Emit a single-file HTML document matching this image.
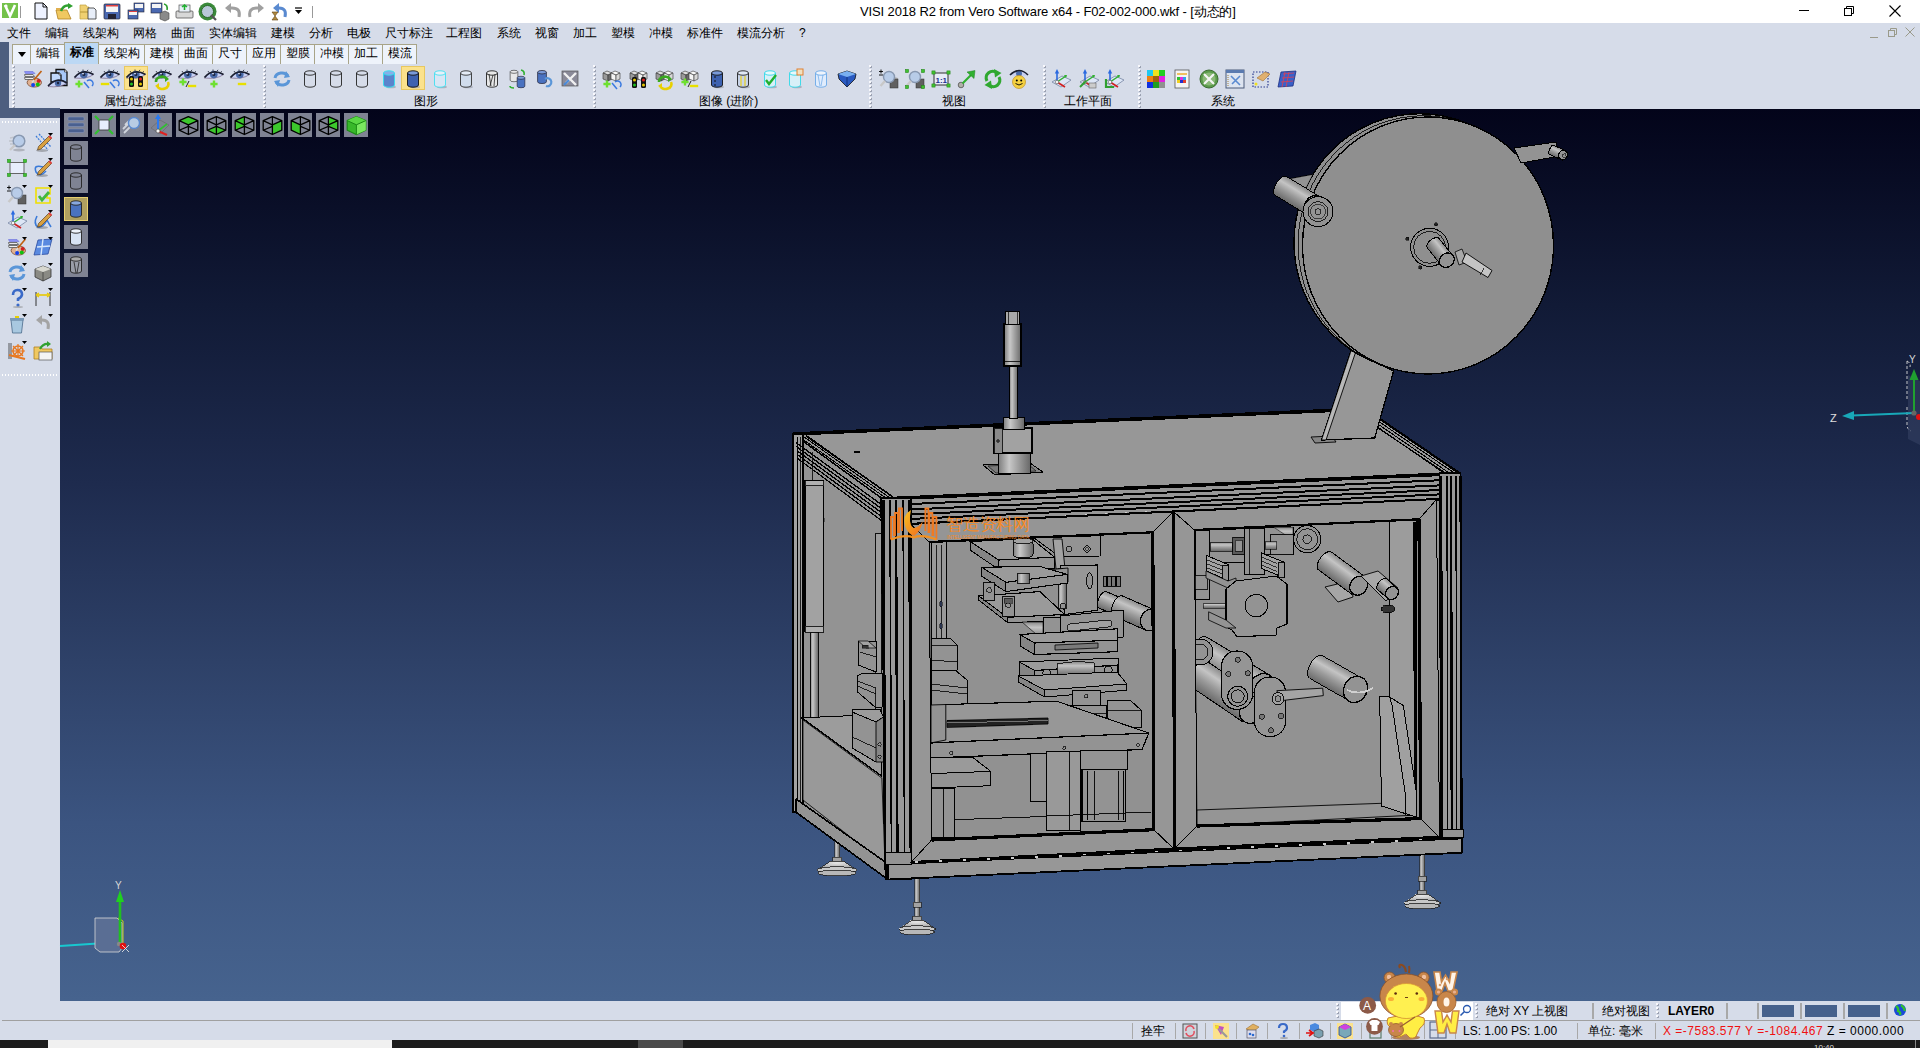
<!DOCTYPE html>
<html><head><meta charset="utf-8"><style>
*{margin:0;padding:0;box-sizing:border-box}
html,body{width:1920px;height:1048px;overflow:hidden;background:#d6dce9;font-family:"Liberation Sans",sans-serif;font-size:12px;color:#000}
.a{position:absolute;overflow:visible}
.m{position:absolute;top:26px;font-size:12px;line-height:14px;white-space:nowrap}
.tab{position:absolute;top:44px;height:20px;background:#eef3fb;border-left:1px solid #a8a488;font-size:12px;line-height:18px;text-align:center;white-space:nowrap}
.lbl{position:absolute;top:94px;font-size:12px;line-height:14px;white-space:nowrap}
.dsep{position:absolute;width:3px}
.vb{position:absolute;width:24px;height:24px;background:#7f8393}
.st{position:absolute;font-size:12px;line-height:14px;white-space:nowrap}
.vl{position:absolute;width:2px;height:16px;background:#a8a8a8}
</style></head><body>
<svg width="0" height="0" style="position:absolute"><defs><pattern id="dp" width="3" height="4" patternUnits="userSpaceOnUse"><rect x="1" y="1" width="2" height="2" fill="#9ca2b2"/><rect x="0" y="0" width="2" height="2" fill="#f8f8fc"/></pattern></defs></svg>
<div class="a" style="left:0;top:0;width:1920px;height:23px;background:#fff"></div>
<svg class="a" style="left:2px;top:3px" width="16" height="16" viewBox="0 0 16 16"><rect x="0" y="0" width="16" height="15" fill="#74c24a"/><path d="M3 2 L8 13 L13 2" fill="none" stroke="#fff" stroke-width="2.6"/><circle cx="4" cy="3" r="1.6" fill="#fff"/></svg>
<div class="a" style="left:20px;top:6px;width:1px;height:12px;background:#999"></div>
<svg class="a" style="left:33px;top:2px" width="19" height="19" viewBox="0 0 19 19"><path d="M2 1 H10 L14 5 V17 H2Z" fill="#eef2ff" stroke="#111" stroke-width="1"/><path d="M10 1 V5 H14" fill="none" stroke="#111" stroke-width="1"/></svg>
<svg class="a" style="left:55px;top:2px" width="19" height="19" viewBox="0 0 19 19"><path d="M1 8 H12 L16 17 H3Z" fill="#f0c860" stroke="#b08020" stroke-width="0.8"/><path d="M1 6 H6 L7 8 H1Z" fill="#e0b050"/><path d="M6 9 Q9 2 15 4" fill="none" stroke="#30a030" stroke-width="2.5"/><path d="M13 1 L18 4 L13 7Z" fill="#30a030"/></svg>
<svg class="a" style="left:79px;top:2px" width="19" height="19" viewBox="0 0 19 19"><path d="M1 3 H7 L8 5 H10 V10 H1Z M1 10 H10 V17 H1Z" fill="#f0d070" stroke="#c0a040" stroke-width="0.7"/><path d="M9 6 H15 L17 8 V17 H9Z" fill="#e8eef8" stroke="#333" stroke-width="0.8"/></svg>
<svg class="a" style="left:103px;top:2px" width="19" height="19" viewBox="0 0 19 19"><rect x="1" y="2" width="16" height="15" rx="1" fill="#4a68b0" stroke="#223" stroke-width="0.7"/><rect x="3" y="3" width="12" height="7" fill="#f4f4f4"/><rect x="3" y="3" width="12" height="1.5" fill="#e04040"/><rect x="5" y="12" width="8" height="5" fill="#223"/></svg>
<svg class="a" style="left:127px;top:2px" width="19" height="19" viewBox="0 0 19 19"><rect x="7" y="1" width="10" height="9" fill="#4a68b0" stroke="#223" stroke-width="0.6"/><rect x="8" y="2" width="8" height="4" fill="#f4f4f4"/><rect x="1" y="8" width="10" height="9" fill="#4a68b0" stroke="#223" stroke-width="0.6"/><rect x="2" y="9" width="8" height="4" fill="#f4f4f4"/><rect x="2" y="9" width="8" height="1" fill="#e04040"/></svg>
<svg class="a" style="left:150px;top:2px" width="19" height="19" viewBox="0 0 19 19"><rect x="1" y="1" width="11" height="10" fill="#4a68b0" stroke="#223" stroke-width="0.6"/><rect x="2" y="2" width="9" height="4" fill="#f4f4f4"/><path d="M10 11 L15 9 L19 11 V17 L15 19 L10 17Z" fill="#8a8a8a" stroke="#444" stroke-width="0.6"/><path d="M14 2 Q18 3 17 8" fill="none" stroke="#30a030" stroke-width="1.6"/></svg>
<svg class="a" style="left:175px;top:2px" width="19" height="19" viewBox="0 0 19 19"><rect x="1" y="9" width="17" height="7" rx="1" fill="#d8d8d8" stroke="#555" stroke-width="0.8"/><rect x="4" y="3" width="11" height="7" fill="#e8f0f8" stroke="#555" stroke-width="0.7"/><path d="M9.5 3 V8 M7 5 L9.5 3 L12 5" stroke="#20b030" stroke-width="1.6" fill="none"/></svg>
<svg class="a" style="left:198px;top:2px" width="19" height="19" viewBox="0 0 19 19"><circle cx="9.5" cy="9.5" r="9" fill="#3a8a3a"/><circle cx="9.5" cy="9.5" r="6" fill="#b8c8d8" stroke="#2a6a2a" stroke-width="1"/><path d="M13 13 L18 18" stroke="#555" stroke-width="2.2"/></svg>
<svg class="a" style="left:224px;top:2px" width="19" height="19" viewBox="0 0 19 19"><path d="M15 15 Q17 6 8 6 H5" fill="none" stroke="#a0a0a0" stroke-width="3"/><path d="M1 6 L7 1 V11Z" fill="#a0a0a0"/></svg>
<svg class="a" style="left:247px;top:2px" width="19" height="19" viewBox="0 0 19 19"><path d="M3 15 Q1 6 10 6 H13" fill="none" stroke="#a0a0a0" stroke-width="3"/><path d="M17 6 L11 1 V11Z" fill="#a0a0a0"/></svg>
<svg class="a" style="left:270px;top:2px" width="19" height="19" viewBox="0 0 19 19"><path d="M15 15 Q17 6 9 6 H7" fill="none" stroke="#5a8ad0" stroke-width="3"/><path d="M3 6 L9 1 V11Z" fill="#5a8ad0"/><path d="M2 10 H8 L5 14 L8 18 H2 L5 14Z" fill="#b08a40" stroke="#604010" stroke-width="0.6"/></svg>
<svg class="a" style="left:294px;top:6px" width="10" height="10" viewBox="0 0 10 10"><path d="M1 2 H8" stroke="#000" stroke-width="1.2"/><path d="M1 4 H8 L4.5 8Z" fill="#000"/></svg>
<div class="a" style="left:312px;top:6px;width:1px;height:12px;background:#999"></div>
<div class="a" style="left:860px;top:4px;font-size:13px;line-height:15px;white-space:nowrap;letter-spacing:-0.13px">VISI 2018 R2 from Vero Software x64 - F02-002-000.wkf - [动态的]</div>
<svg class="a" style="left:1796px;top:4px" width="16" height="16" viewBox="0 0 16 16"><path d="M3 6.5 H13" stroke="#000" stroke-width="1"/></svg>
<svg class="a" style="left:1841px;top:3px" width="16" height="16" viewBox="0 0 16 16"><rect x="3.5" y="5.5" width="7" height="7" fill="none" stroke="#000" stroke-width="1"/><path d="M5.5 5.5 V3.5 H12.5 V10.5 H10.5" fill="none" stroke="#000" stroke-width="1"/></svg>
<svg class="a" style="left:1887px;top:3px" width="16" height="16" viewBox="0 0 16 16"><path d="M2.5 2.5 L13.5 13.5 M13.5 2.5 L2.5 13.5" stroke="#000" stroke-width="1.1"/></svg>
<div class="a" style="left:0;top:23px;width:1920px;height:19px;background:#d6dce9"></div>
<div class="m" style="left:7px">文件</div>
<div class="m" style="left:45px">编辑</div>
<div class="m" style="left:83px">线架构</div>
<div class="m" style="left:133px">网格</div>
<div class="m" style="left:171px">曲面</div>
<div class="m" style="left:209px">实体编辑</div>
<div class="m" style="left:271px">建模</div>
<div class="m" style="left:309px">分析</div>
<div class="m" style="left:347px">电极</div>
<div class="m" style="left:385px">尺寸标注</div>
<div class="m" style="left:446px">工程图</div>
<div class="m" style="left:497px">系统</div>
<div class="m" style="left:535px">视窗</div>
<div class="m" style="left:573px">加工</div>
<div class="m" style="left:611px">塑模</div>
<div class="m" style="left:649px">冲模</div>
<div class="m" style="left:687px">标准件</div>
<div class="m" style="left:737px">模流分析</div>
<div class="m" style="left:799px">?</div>
<svg class="a" style="left:1868px;top:28px" width="12" height="12" viewBox="0 0 12 12"><path d="M2 9.5 H10" stroke="#9a9a8a" stroke-width="1"/></svg>
<svg class="a" style="left:1886px;top:26px" width="12" height="12" viewBox="0 0 12 12"><rect x="2.5" y="4.5" width="6" height="6" fill="none" stroke="#9a9a8a"/><path d="M4.5 4.5V2.5H10.5V8.5H8.5" fill="none" stroke="#9a9a8a"/></svg>
<svg class="a" style="left:1904px;top:26px" width="12" height="12" viewBox="0 0 12 12"><path d="M1.5 1.5 L10.5 10.5 M10.5 1.5 L1.5 10.5" stroke="#9a9a8a" stroke-width="1"/></svg>
<div class="a" style="left:0;top:42px;width:9px;height:76px;background:#4d5e7f"></div>
<div class="a" style="left:9px;top:42px;width:1911px;height:22px;background:#d6dce9"></div>
<div class="a" style="left:12px;top:44px;width:405px;height:20px;background:#eef3fb;border-top:1px solid #a8a488;border-right:1px solid #a8a488"></div>
<div class="tab" style="left:12px;width:18px;top:45px;height:19px;line-height:17px"></div>
<div class="tab" style="left:30px;width:34px;top:45px;height:19px;line-height:17px">编辑</div>
<div class="tab" style="left:64px;top:42px;width:35px;height:22px;background:#bcd8f4;border:1px solid #a8a488;border-bottom:none;font-weight:bold;line-height:18px">标准</div>
<div class="tab" style="left:98px;width:46px;top:45px;height:19px;line-height:17px">线架构</div>
<div class="tab" style="left:144px;width:34px;top:45px;height:19px;line-height:17px">建模</div>
<div class="tab" style="left:178px;width:34px;top:45px;height:19px;line-height:17px">曲面</div>
<div class="tab" style="left:212px;width:34px;top:45px;height:19px;line-height:17px">尺寸</div>
<div class="tab" style="left:246px;width:34px;top:45px;height:19px;line-height:17px">应用</div>
<div class="tab" style="left:280px;width:34px;top:45px;height:19px;line-height:17px">塑膜</div>
<div class="tab" style="left:314px;width:34px;top:45px;height:19px;line-height:17px">冲模</div>
<div class="tab" style="left:348px;width:34px;top:45px;height:19px;line-height:17px">加工</div>
<div class="tab" style="left:382px;width:34px;top:45px;height:19px;line-height:17px">模流</div>
<svg class="a" style="left:17px;top:50px" width="10" height="8" viewBox="0 0 10 8"><path d="M1 2 H9 L5 7Z" fill="#000"/></svg>
<div class="a" style="left:9px;top:64px;width:1911px;height:45px;background:#d6dce9"></div>
<svg class="a" style="left:12px;top:65px" width="3" height="43"><rect width="3" height="43" fill="url(#dp)"/></svg>
<svg class="a" style="left:263px;top:65px" width="3" height="43"><rect width="3" height="43" fill="url(#dp)"/></svg>
<svg class="a" style="left:593px;top:65px" width="3" height="43"><rect width="3" height="43" fill="url(#dp)"/></svg>
<svg class="a" style="left:869px;top:65px" width="3" height="43"><rect width="3" height="43" fill="url(#dp)"/></svg>
<svg class="a" style="left:1043px;top:65px" width="3" height="43"><rect width="3" height="43" fill="url(#dp)"/></svg>
<svg class="a" style="left:1138px;top:65px" width="3" height="43"><rect width="3" height="43" fill="url(#dp)"/></svg>
<div class="lbl" style="left:104px">属性/过滤器</div>
<div class="lbl" style="left:414px">图形</div>
<div class="lbl" style="left:699px">图像 (进阶)</div>
<div class="lbl" style="left:942px">视图</div>
<div class="lbl" style="left:1064px">工作平面</div>
<div class="lbl" style="left:1211px">系统</div>
<div class="a" style="left:124px;top:66px;width:24px;height:24px;background:#fbe28c;border:1px solid #e8c860"></div>
<div class="a" style="left:401px;top:66px;width:24px;height:24px;background:#fbe28c;border:1px solid #e8c860"></div>
<svg class="a" style="left:23px;top:69px" width="20" height="20" viewBox="0 0 20 20"><ellipse cx="11.3" cy="13.5" rx="7.2" ry="4.6" fill="#e0b090" stroke="#7a4a30" stroke-width="0.8"/>
<path d="M1.5 2.5 H10 L12 4.5 H2.5Z" fill="#8a90f8" stroke="#6a70d8" stroke-width="0.6"/>
<path d="M1.5 5.5 H10 L11.5 7.5 H2Z" fill="#e8e8e8" stroke="#555" stroke-width="0.8"/>
<path d="M1.5 8.5 H10 L11.5 10.5 H2Z" fill="#f0f0f0" stroke="#555" stroke-width="0.8"/>
<circle cx="15.7" cy="12" r="2" fill="#d02020"/><circle cx="14.8" cy="15.5" r="2" fill="#10c010"/><circle cx="10.1" cy="16" r="2" fill="#1040f0"/>
<path d="M18.5 2 L10 12" stroke="#c06010" stroke-width="1.6"/><path d="M11 11 L9 13.5" stroke="#ddd" stroke-width="1.8"/></svg>
<svg class="a" style="left:48px;top:69px" width="20" height="20" viewBox="0 0 20 20"><path d="M8 0.5 H16.5 L19 3 V16.5 H8Z" fill="#a8c8f8" stroke="#111" stroke-width="1.3"/><path d="M16.5 0.5 V3 H19" fill="#fff" stroke="#111" stroke-width="0.6"/>
<path d="M3 4 H11 L13 6 V13 H3Z" fill="#c0d8fc" stroke="#111" stroke-width="1.3"/><path d="M11 4 V6 H13" fill="#fff" stroke="#111" stroke-width="0.6"/>
<path d="M0 17.5 Q9 7 19 14 Q12 19 0 17.5Z" fill="#c8d2f4" stroke="#5a3a5a" stroke-width="0.5"/>
<circle cx="10" cy="14" r="3.2" fill="#4a6aa8"/><circle cx="10" cy="14" r="1.2" fill="#1a2440"/>
<path d="M0 17 Q9 7 19 14" fill="none" stroke="#1a1f30" stroke-width="1.6"/></svg>
<svg class="a" style="left:74px;top:69px" width="20" height="20" viewBox="0 0 20 20"><g transform="translate(0,0)">
<path d="M0.5 9 Q8 -1 19.5 5.5 Q13 10.5 0.5 9Z" fill="#c8d2f4" stroke="#5a3a5a" stroke-width="0.5"/>
<circle cx="9.8" cy="5.6" r="3.8" fill="#4a6aa8"/><circle cx="9.8" cy="5.6" r="1.5" fill="#1a2440"/><circle cx="9" cy="4.6" r="0.9" fill="#dfe8ff"/>
<path d="M0.5 8.6 Q8 -1 19.5 5.5" fill="none" stroke="#1a1f30" stroke-width="1.7"/>
<path d="M5 3.5 L4 2 M9 2 L9 0.5 M13 2.2 L14 0.8 M16.5 3.4 L18 2.4" stroke="#1a1f30" stroke-width="0.8"/>
</g><path d="M1.4 15H8.6M5 11.4V18.6" stroke="#6ee030" stroke-width="2.4"/><path d="M10 13 L15 19" stroke="#3a7ae0" stroke-width="1.5"/><path d="M13 12 A3.2 3.2 0 1 1 18 17" fill="none" stroke="#3a7ae0" stroke-width="1.5"/></svg>
<svg class="a" style="left:100px;top:69px" width="20" height="20" viewBox="0 0 20 20"><g transform="translate(0,0)">
<path d="M0.5 9 Q8 -1 19.5 5.5 Q13 10.5 0.5 9Z" fill="#c8d2f4" stroke="#5a3a5a" stroke-width="0.5"/>
<circle cx="9.8" cy="5.6" r="3.8" fill="#4a6aa8"/><circle cx="9.8" cy="5.6" r="1.5" fill="#1a2440"/><circle cx="9" cy="4.6" r="0.9" fill="#dfe8ff"/>
<path d="M0.5 8.6 Q8 -1 19.5 5.5" fill="none" stroke="#1a1f30" stroke-width="1.7"/>
<path d="M5 3.5 L4 2 M9 2 L9 0.5 M13 2.2 L14 0.8 M16.5 3.4 L18 2.4" stroke="#1a1f30" stroke-width="0.8"/>
</g><path d="M0.7999999999999998 15H9.2" stroke="#e8e000" stroke-width="2.4"/><path d="M10 13 L15 19" stroke="#3a7ae0" stroke-width="1.5"/><path d="M13 12 A3.2 3.2 0 1 1 18 17" fill="none" stroke="#3a7ae0" stroke-width="1.5"/></svg>
<svg class="a" style="left:126px;top:69px" width="20" height="20" viewBox="0 0 20 20"><g transform="translate(0,0)">
<path d="M0.5 9 Q8 -1 19.5 5.5 Q13 10.5 0.5 9Z" fill="#c8d2f4" stroke="#5a3a5a" stroke-width="0.5"/>
<circle cx="9.8" cy="5.6" r="3.8" fill="#4a6aa8"/><circle cx="9.8" cy="5.6" r="1.5" fill="#1a2440"/><circle cx="9" cy="4.6" r="0.9" fill="#dfe8ff"/>
<path d="M0.5 8.6 Q8 -1 19.5 5.5" fill="none" stroke="#1a1f30" stroke-width="1.7"/>
<path d="M5 3.5 L4 2 M9 2 L9 0.5 M13 2.2 L14 0.8 M16.5 3.4 L18 2.4" stroke="#1a1f30" stroke-width="0.8"/>
</g><rect x="3" y="7" width="5" height="11" rx="1.5" fill="#111"/><rect x="12" y="7" width="5" height="11" rx="1.5" fill="#111"/>
<circle cx="5.5" cy="10" r="1.5" fill="#e8c800"/><circle cx="5.5" cy="15" r="1.5" fill="#20c020"/><circle cx="14.5" cy="10" r="1.5" fill="#e02020"/><circle cx="14.5" cy="15" r="1.5" fill="#e8c800"/></svg>
<svg class="a" style="left:152px;top:69px" width="20" height="20" viewBox="0 0 20 20"><g transform="translate(0,0)">
<path d="M0.5 9 Q8 -1 19.5 5.5 Q13 10.5 0.5 9Z" fill="#c8d2f4" stroke="#5a3a5a" stroke-width="0.5"/>
<circle cx="9.8" cy="5.6" r="3.8" fill="#4a6aa8"/><circle cx="9.8" cy="5.6" r="1.5" fill="#1a2440"/><circle cx="9" cy="4.6" r="0.9" fill="#dfe8ff"/>
<path d="M0.5 8.6 Q8 -1 19.5 5.5" fill="none" stroke="#1a1f30" stroke-width="1.7"/>
<path d="M5 3.5 L4 2 M9 2 L9 0.5 M13 2.2 L14 0.8 M16.5 3.4 L18 2.4" stroke="#1a1f30" stroke-width="0.8"/>
</g><path d="M4 13 A6 5 0 0 1 15 10" fill="none" stroke="#3aa820" stroke-width="2.6"/><path d="M13 7 L17 10 L13 13Z" fill="#3aa820"/>
<path d="M16 13 A6 5 0 0 1 5 17" fill="none" stroke="#e8d000" stroke-width="2.6"/><path d="M7 14 L3 17 L7 19Z" fill="#e8d000"/></svg>
<svg class="a" style="left:178px;top:69px" width="20" height="20" viewBox="0 0 20 20"><g transform="translate(0,0)">
<path d="M0.5 9 Q8 -1 19.5 5.5 Q13 10.5 0.5 9Z" fill="#c8d2f4" stroke="#5a3a5a" stroke-width="0.5"/>
<circle cx="9.8" cy="5.6" r="3.8" fill="#4a6aa8"/><circle cx="9.8" cy="5.6" r="1.5" fill="#1a2440"/><circle cx="9" cy="4.6" r="0.9" fill="#dfe8ff"/>
<path d="M0.5 8.6 Q8 -1 19.5 5.5" fill="none" stroke="#1a1f30" stroke-width="1.7"/>
<path d="M5 3.5 L4 2 M9 2 L9 0.5 M13 2.2 L14 0.8 M16.5 3.4 L18 2.4" stroke="#1a1f30" stroke-width="0.8"/>
</g><path d="M1.4 13H8.6M5 9.4V16.6" stroke="#6ee030" stroke-width="2.4"/><path d="M8 18 L11 12" stroke="#222" stroke-width="1"/><path d="M9.8 17H18.2" stroke="#e8e000" stroke-width="2.4"/></svg>
<svg class="a" style="left:204px;top:69px" width="20" height="20" viewBox="0 0 20 20"><g transform="translate(0,0)">
<path d="M0.5 9 Q8 -1 19.5 5.5 Q13 10.5 0.5 9Z" fill="#c8d2f4" stroke="#5a3a5a" stroke-width="0.5"/>
<circle cx="9.8" cy="5.6" r="3.8" fill="#4a6aa8"/><circle cx="9.8" cy="5.6" r="1.5" fill="#1a2440"/><circle cx="9" cy="4.6" r="0.9" fill="#dfe8ff"/>
<path d="M0.5 8.6 Q8 -1 19.5 5.5" fill="none" stroke="#1a1f30" stroke-width="1.7"/>
<path d="M5 3.5 L4 2 M9 2 L9 0.5 M13 2.2 L14 0.8 M16.5 3.4 L18 2.4" stroke="#1a1f30" stroke-width="0.8"/>
</g><path d="M6.4 15H13.6M10 11.4V18.6" stroke="#6ee030" stroke-width="2.4"/></svg>
<svg class="a" style="left:230px;top:69px" width="20" height="20" viewBox="0 0 20 20"><g transform="translate(0,0)">
<path d="M0.5 9 Q8 -1 19.5 5.5 Q13 10.5 0.5 9Z" fill="#c8d2f4" stroke="#5a3a5a" stroke-width="0.5"/>
<circle cx="9.8" cy="5.6" r="3.8" fill="#4a6aa8"/><circle cx="9.8" cy="5.6" r="1.5" fill="#1a2440"/><circle cx="9" cy="4.6" r="0.9" fill="#dfe8ff"/>
<path d="M0.5 8.6 Q8 -1 19.5 5.5" fill="none" stroke="#1a1f30" stroke-width="1.7"/>
<path d="M5 3.5 L4 2 M9 2 L9 0.5 M13 2.2 L14 0.8 M16.5 3.4 L18 2.4" stroke="#1a1f30" stroke-width="0.8"/>
</g><path d="M7.8 15H16.2" stroke="#e8e000" stroke-width="2.4"/></svg>
<svg class="a" style="left:272px;top:69px" width="20" height="20" viewBox="0 0 20 20"><path d="M3 9 A7 6 0 0 1 16 7" fill="none" stroke="#5a96d8" stroke-width="3"/><path d="M14 2 L18 8 L12 9Z" fill="#5a96d8"/>
<path d="M17 11 A7 6 0 0 1 4 13" fill="none" stroke="#5a96d8" stroke-width="3"/><path d="M6 18 L2 12 L8 11Z" fill="#5a96d8"/></svg>
<svg class="a" style="left:300px;top:69px" width="20" height="20" viewBox="0 0 20 20"><path d="M4.5 4 V16 A5.5 2.2 0 0 0 15.5 16 V4" fill="none" stroke="#222" stroke-width="0.9"/><ellipse cx="10" cy="4" rx="5.5" ry="2.2" fill="none" stroke="#222" stroke-width="0.9"/></svg>
<svg class="a" style="left:326px;top:69px" width="20" height="20" viewBox="0 0 20 20"><path d="M4.5 4 V16 A5.5 2.2 0 0 0 15.5 16 V4" fill="none" stroke="#222" stroke-width="0.9"/><ellipse cx="10" cy="4" rx="5.5" ry="2.2" fill="none" stroke="#222" stroke-width="0.9"/></svg>
<svg class="a" style="left:352px;top:69px" width="20" height="20" viewBox="0 0 20 20"><path d="M4.5 4 V16 A5.5 2.2 0 0 0 15.5 16 V4" fill="none" stroke="#222" stroke-width="0.9"/><ellipse cx="10" cy="4" rx="5.5" ry="2.2" fill="none" stroke="#222" stroke-width="0.9"/></svg>
<svg class="a" style="left:379px;top:69px" width="20" height="20" viewBox="0 0 20 20"><ellipse cx="12" cy="18" rx="5" ry="1.3" fill="#9aa0ac" opacity="0.7"/><path d="M4.5 4 V16 A5.5 2.2 0 0 0 15.5 16 V4" fill="#5a84cc" stroke="#30e0f0" stroke-width="0.9"/><ellipse cx="10" cy="4" rx="5.5" ry="2.2" fill="#88aee8" stroke="#30e0f0" stroke-width="0.9"/></svg>
<svg class="a" style="left:403px;top:69px" width="20" height="20" viewBox="0 0 20 20"><ellipse cx="12" cy="18" rx="5" ry="1.3" fill="#9aa0ac" opacity="0.7"/><path d="M4.5 4 V16 A5.5 2.2 0 0 0 15.5 16 V4" fill="#3e62b0" stroke="#111" stroke-width="0.9"/><ellipse cx="10" cy="4" rx="5.5" ry="2.2" fill="#7a9ad8" stroke="#111" stroke-width="0.9"/></svg>
<svg class="a" style="left:430px;top:69px" width="20" height="20" viewBox="0 0 20 20"><ellipse cx="12" cy="18" rx="5" ry="1.3" fill="#9aa0ac" opacity="0.7"/><path d="M4.5 4 V16 A5.5 2.2 0 0 0 15.5 16 V4" fill="#d8e6f4" stroke="#40e0f0" stroke-width="0.9"/><ellipse cx="10" cy="4" rx="5.5" ry="2.2" fill="#e8f0f8" stroke="#40e0f0" stroke-width="0.9"/></svg>
<svg class="a" style="left:456px;top:69px" width="20" height="20" viewBox="0 0 20 20"><ellipse cx="12" cy="18" rx="5" ry="1.3" fill="#9aa0ac" opacity="0.7"/><path d="M4.5 4 V16 A5.5 2.2 0 0 0 15.5 16 V4" fill="#d0dcec" stroke="#333" stroke-width="0.9"/><ellipse cx="10" cy="4" rx="5.5" ry="2.2" fill="#e4ecf6" stroke="#333" stroke-width="0.9"/></svg>
<svg class="a" style="left:482px;top:69px" width="20" height="20" viewBox="0 0 20 20"><path d="M4.5 4 V16 A5.5 2.2 0 0 0 15.5 16 V4" fill="#e8e8e8" stroke="#222" stroke-width="0.9"/><ellipse cx="10" cy="4" rx="5.5" ry="2.2" fill="#e8e8e8" stroke="#222" stroke-width="0.9"/><path d="M7 5 L9 17 M11 6 L8 17 M13 5 L12 17" stroke="#222" stroke-width="0.8"/></svg>
<svg class="a" style="left:507px;top:69px" width="20" height="20" viewBox="0 0 20 20"><g transform="scale(0.7)"><path d="M4.5 4 V16 A5.5 2.2 0 0 0 15.5 16 V4" fill="#e8e8e8" stroke="#333" stroke-width="0.9"/><ellipse cx="10" cy="4" rx="5.5" ry="2.2" fill="#e8e8e8" stroke="#333" stroke-width="0.9"/></g><g transform="translate(7,6) scale(0.7)"><path d="M4.5 4 V16 A5.5 2.2 0 0 0 15.5 16 V4" fill="#4a72c0" stroke="#223" stroke-width="0.9"/><ellipse cx="10" cy="4" rx="5.5" ry="2.2" fill="#7a9ad8" stroke="#223" stroke-width="0.9"/></g><path d="M14 1 Q18 2 17 6" stroke="#30b030" stroke-width="1.6" fill="none"/><path d="M3 17 Q3 19 7 19" stroke="#30b030" stroke-width="1.6" fill="none"/></svg>
<svg class="a" style="left:534px;top:69px" width="20" height="20" viewBox="0 0 20 20"><g transform="scale(0.8)"><path d="M4.5 4 V16 A5.5 2.2 0 0 0 15.5 16 V4" fill="#4a72c0" stroke="#223" stroke-width="0.9"/><ellipse cx="10" cy="4" rx="5.5" ry="2.2" fill="#7a9ad8" stroke="#223" stroke-width="0.9"/></g><path d="M11 10 A4 4 0 1 1 12 17" fill="none" stroke="#5a96d8" stroke-width="2.2"/></svg>
<svg class="a" style="left:560px;top:69px" width="20" height="20" viewBox="0 0 20 20"><rect x="2" y="2" width="16" height="15" fill="#8a8a98" stroke="#555" stroke-width="0.7"/><path d="M4 4 L16 16 M16 4 L6 14" stroke="#f0f0f0" stroke-width="2.4"/><path d="M4 16 L9 11" stroke="#4a8ad8" stroke-width="2"/></svg>
<svg class="a" style="left:602px;top:69px" width="20" height="20" viewBox="0 0 20 20"><path d="M1 4 L5 2 L10 4 L6 6Z" fill="#e0e0e0" stroke="#333" stroke-width="0.6"/><path d="M1 4 L6 6 V12 L1 10Z" fill="#9a9a9a" stroke="#333" stroke-width="0.6"/><path d="M6 6 L10 4 V10 L6 12Z" fill="#6a6a6a" stroke="#333" stroke-width="0.6"/><path d="M9 4 L13 2 L18 4 L14 6Z" fill="#fafafa" stroke="#333" stroke-width="0.6"/><path d="M9 4 L14 6 V12 L9 10Z" fill="#f4f4f4" stroke="#333" stroke-width="0.6"/><path d="M14 6 L18 4 V10 L14 12Z" fill="#d8d8d8" stroke="#333" stroke-width="0.6"/><path d="M1.4 15H8.6M5 11.4V18.6" stroke="#6ee030" stroke-width="2.4"/><path d="M10 14 L15 20" stroke="#3a7ae0" stroke-width="1.5"/><path d="M13 13 A3.2 3.2 0 1 1 18 18" fill="none" stroke="#3a7ae0" stroke-width="1.5"/></svg>
<svg class="a" style="left:629px;top:69px" width="20" height="20" viewBox="0 0 20 20"><path d="M1 4 L5 2 L10 4 L6 6Z" fill="#e0e0e0" stroke="#333" stroke-width="0.6"/><path d="M1 4 L6 6 V12 L1 10Z" fill="#9a9a9a" stroke="#333" stroke-width="0.6"/><path d="M6 6 L10 4 V10 L6 12Z" fill="#6a6a6a" stroke="#333" stroke-width="0.6"/><path d="M9 4 L13 2 L18 4 L14 6Z" fill="#fafafa" stroke="#333" stroke-width="0.6"/><path d="M9 4 L14 6 V12 L9 10Z" fill="#f4f4f4" stroke="#333" stroke-width="0.6"/><path d="M14 6 L18 4 V10 L14 12Z" fill="#d8d8d8" stroke="#333" stroke-width="0.6"/><rect x="3" y="8" width="5" height="11" rx="1.5" fill="#111"/><rect x="12" y="8" width="5" height="11" rx="1.5" fill="#111"/><circle cx="5.5" cy="11" r="1.5" fill="#e8c800"/><circle cx="5.5" cy="16" r="1.5" fill="#20c020"/><circle cx="14.5" cy="11" r="1.5" fill="#e02020"/><circle cx="14.5" cy="16" r="1.5" fill="#e8c800"/></svg>
<svg class="a" style="left:655px;top:69px" width="20" height="20" viewBox="0 0 20 20"><path d="M1 4 L5 2 L10 4 L6 6Z" fill="#e0e0e0" stroke="#333" stroke-width="0.6"/><path d="M1 4 L6 6 V12 L1 10Z" fill="#9a9a9a" stroke="#333" stroke-width="0.6"/><path d="M6 6 L10 4 V10 L6 12Z" fill="#6a6a6a" stroke="#333" stroke-width="0.6"/><path d="M9 4 L13 2 L18 4 L14 6Z" fill="#fafafa" stroke="#333" stroke-width="0.6"/><path d="M9 4 L14 6 V12 L9 10Z" fill="#f4f4f4" stroke="#333" stroke-width="0.6"/><path d="M14 6 L18 4 V10 L14 12Z" fill="#d8d8d8" stroke="#333" stroke-width="0.6"/><path d="M4 13 A6 5 0 0 1 15 10" fill="none" stroke="#3aa820" stroke-width="2.6"/><path d="M13 7 L17 10 L13 13Z" fill="#3aa820"/>
<path d="M16 13 A6 5 0 0 1 5 17" fill="none" stroke="#e8d000" stroke-width="2.6"/><path d="M7 14 L3 17 L7 19Z" fill="#e8d000"/></svg>
<svg class="a" style="left:680px;top:69px" width="20" height="20" viewBox="0 0 20 20"><path d="M1 4 L5 2 L10 4 L6 6Z" fill="#e0e0e0" stroke="#333" stroke-width="0.6"/><path d="M1 4 L6 6 V12 L1 10Z" fill="#9a9a9a" stroke="#333" stroke-width="0.6"/><path d="M6 6 L10 4 V10 L6 12Z" fill="#6a6a6a" stroke="#333" stroke-width="0.6"/><path d="M9 4 L13 2 L18 4 L14 6Z" fill="#fafafa" stroke="#333" stroke-width="0.6"/><path d="M9 4 L14 6 V12 L9 10Z" fill="#f4f4f4" stroke="#333" stroke-width="0.6"/><path d="M14 6 L18 4 V10 L14 12Z" fill="#d8d8d8" stroke="#333" stroke-width="0.6"/><path d="M1.4 13H8.6M5 9.4V16.6" stroke="#6ee030" stroke-width="2.4"/><path d="M8 18 L11 12" stroke="#222" stroke-width="1"/><path d="M9.8 17H18.2" stroke="#e8e000" stroke-width="2.4"/></svg>
<svg class="a" style="left:707px;top:69px" width="20" height="20" viewBox="0 0 20 20"><ellipse cx="12" cy="18" rx="5" ry="1.3" fill="#9aa0ac" opacity="0.7"/><path d="M4.5 4 V16 A5.5 2.2 0 0 0 15.5 16 V4" fill="#3e62b0" stroke="#111" stroke-width="0.9"/><ellipse cx="10" cy="4" rx="5.5" ry="2.2" fill="#7a9ad8" stroke="#111" stroke-width="0.9"/><path d="M8 7V17" stroke="#111" stroke-width="1" stroke-dasharray="2 2"/></svg>
<svg class="a" style="left:733px;top:69px" width="20" height="20" viewBox="0 0 20 20"><ellipse cx="12" cy="18" rx="5" ry="1.3" fill="#9aa0ac" opacity="0.7"/><path d="M4.5 4 V16 A5.5 2.2 0 0 0 15.5 16 V4" fill="#c8d4e8" stroke="#222" stroke-width="0.9"/><ellipse cx="10" cy="4" rx="5.5" ry="2.2" fill="#e0e8f4" stroke="#222" stroke-width="0.9"/><path d="M8 7V17 M12 7V17" stroke="#e8d020" stroke-width="1.2"/></svg>
<svg class="a" style="left:760px;top:69px" width="20" height="20" viewBox="0 0 20 20"><ellipse cx="12" cy="18" rx="5" ry="1.3" fill="#9aa0ac" opacity="0.7"/><path d="M4.5 4 V16 A5.5 2.2 0 0 0 15.5 16 V4" fill="#d8f0f8" stroke="#30d8e8" stroke-width="0.9"/><ellipse cx="10" cy="4" rx="5.5" ry="2.2" fill="#e8f8fc" stroke="#30d8e8" stroke-width="0.9"/><path d="M6 11 L9 15 L16 6" fill="none" stroke="#20b030" stroke-width="2.4"/></svg>
<svg class="a" style="left:785px;top:69px" width="20" height="20" viewBox="0 0 20 20"><ellipse cx="12" cy="18" rx="5" ry="1.3" fill="#9aa0ac" opacity="0.7"/><path d="M4.5 4 V16 A5.5 2.2 0 0 0 15.5 16 V4" fill="#d8f0f8" stroke="#30d8e8" stroke-width="0.9"/><ellipse cx="10" cy="4" rx="5.5" ry="2.2" fill="#e8f8fc" stroke="#30d8e8" stroke-width="0.9"/><rect x="12" y="0" width="6" height="6" fill="#f0e0c0" stroke="#e08030" stroke-width="1"/></svg>
<svg class="a" style="left:811px;top:69px" width="20" height="20" viewBox="0 0 20 20"><path d="M4.5 4 V16 A5.5 2.2 0 0 0 15.5 16 V4" fill="#e0ecfc" stroke="#6aa8e8" stroke-width="0.9"/><ellipse cx="10" cy="4" rx="5.5" ry="2.2" fill="#eef4fc" stroke="#6aa8e8" stroke-width="0.9"/><path d="M7 6 L9 17 M12 6 L10 17" stroke="#6aa8e8" stroke-width="0.7"/></svg>
<svg class="a" style="left:837px;top:69px" width="20" height="20" viewBox="0 0 20 20"><path d="M1 5 L10 2 L19 5 L18 10 L10 18 L2 10Z" fill="#2a5ac0" stroke="#111" stroke-width="0.8"/><path d="M1 5 L10 8 L19 5 L10 2Z" fill="#7ab0f0"/><path d="M10 8V18" stroke="#0a2a70" stroke-width="0.8"/></svg>
<svg class="a" style="left:879px;top:69px" width="20" height="20" viewBox="0 0 20 20"><path d="M0 2.5H4 M2 0.5V4.5 M0 6H4" stroke="#000" stroke-width="0.9"/><rect x="11" y="10" width="8" height="9" fill="#606060" stroke="#333" stroke-width="0.5"/><path d="M11 10 L14 8 L19 9 V10" fill="#999"/><circle cx="10" cy="8" r="5.5" fill="#b8cce8" stroke="#8898b0" stroke-width="1.4"/><path d="M6 12 L1.5 17" stroke="#c8c8c8" stroke-width="2.4"/></svg>
<svg class="a" style="left:905px;top:69px" width="20" height="20" viewBox="0 0 20 20"><rect x="11" y="10" width="8" height="9" fill="#606060" stroke="#333" stroke-width="0.5"/><circle cx="10" cy="8" r="5.5" fill="#b8cce8" stroke="#8898b0" stroke-width="1.4"/><path d="M6 12 L1.5 17" stroke="#c8c8c8" stroke-width="2.4"/><rect x="0.3999999999999999" y="0.3999999999999999" width="3.2" height="3.2" fill="#40c030" stroke="#208018" stroke-width="0.5"/><rect x="16.4" y="0.3999999999999999" width="3.2" height="3.2" fill="#40c030" stroke="#208018" stroke-width="0.5"/><rect x="0.3999999999999999" y="16.4" width="3.2" height="3.2" fill="#40c030" stroke="#208018" stroke-width="0.5"/><rect x="16.4" y="16.4" width="3.2" height="3.2" fill="#40c030" stroke="#208018" stroke-width="0.5"/></svg>
<svg class="a" style="left:931px;top:69px" width="20" height="20" viewBox="0 0 20 20"><rect x="3" y="4" width="14" height="12" fill="#e8ecf8" stroke="#333" stroke-width="1"/><text x="4.5" y="13.5" font-size="8" fill="#203090" font-family="Liberation Sans" font-weight="bold">1:1</text><rect x="0.8999999999999999" y="1.9" width="3.2" height="3.2" fill="#40c030" stroke="#208018" stroke-width="0.5"/><rect x="15.9" y="1.9" width="3.2" height="3.2" fill="#40c030" stroke="#208018" stroke-width="0.5"/><rect x="0.8999999999999999" y="14.9" width="3.2" height="3.2" fill="#40c030" stroke="#208018" stroke-width="0.5"/><rect x="15.9" y="14.9" width="3.2" height="3.2" fill="#40c030" stroke="#208018" stroke-width="0.5"/></svg>
<svg class="a" style="left:957px;top:69px" width="20" height="20" viewBox="0 0 20 20"><circle cx="4" cy="16" r="2.8" fill="#b0b0a8" stroke="#444" stroke-width="0.7"/><path d="M5.5 14.5 L16 4" stroke="#30b030" stroke-width="2.2"/><path d="M10 3 L18 1.5 L17 9.5Z" fill="#30b030" stroke="#208020" stroke-width="0.5"/></svg>
<svg class="a" style="left:983px;top:69px" width="20" height="20" viewBox="0 0 20 20"><path d="M4 12 A6.5 6.5 0 0 1 14 4" fill="none" stroke="#30a830" stroke-width="3.2"/><path d="M11 0 L18.5 4 L12 8.5Z" fill="#30a830"/><path d="M16 8 A6.5 6.5 0 0 1 6 16" fill="none" stroke="#30a830" stroke-width="3.2"/><path d="M9 20 L1.5 16 L8 11.5Z" fill="#30a830"/></svg>
<svg class="a" style="left:1009px;top:69px" width="20" height="20" viewBox="0 0 20 20"><path d="M1 6 Q10 -3 19 6 Q10 9 1 6Z" fill="#c8d0f0"/><circle cx="10" cy="4.5" r="3" fill="#4a6aa8"/><path d="M1 6 Q10 -3 19 6" fill="none" stroke="#1a1f30" stroke-width="1.6"/><circle cx="10" cy="13" r="6.5" fill="#f4d040" stroke="#c09020" stroke-width="0.7"/><circle cx="7.8" cy="11.5" r="1" fill="#000"/><circle cx="12.2" cy="11.5" r="1" fill="#000"/><path d="M6.5 14.5 Q10 17.5 13.5 14.5" stroke="#000" stroke-width="0.9" fill="none"/></svg>
<svg class="a" style="left:1051px;top:69px" width="20" height="20" viewBox="0 0 20 20"><path d="M1 13 L11 7 L20 11 L10 18Z" fill="#dde6f6" stroke="#6a7a9a" stroke-width="0.7"/><path d="M6 13 V2.5" stroke="#2a6ae0" stroke-width="1.6"/><path d="M3.8 4.5 L6 0 L8.2 4.5Z" fill="#2a6ae0"/><path d="M6 13 L15 7" stroke="#30b030" stroke-width="1.5"/><path d="M13 6 L16 6 L15 9Z" fill="#30b030"/><path d="M6 13 L14 18" stroke="#d02020" stroke-width="1.7"/><circle cx="6" cy="13" r="1.8" fill="#f4f4f4" stroke="#555" stroke-width="0.6"/></svg>
<svg class="a" style="left:1079px;top:69px" width="20" height="20" viewBox="0 0 20 20"><path d="M1 13 L11 7 L20 11 L10 18Z" fill="#dde6f6" stroke="#6a7a9a" stroke-width="0.7"/><path d="M6 13 V2.5" stroke="#2a6ae0" stroke-width="1.6"/><path d="M3.8 4.5 L6 0 L8.2 4.5Z" fill="#2a6ae0"/><path d="M6 13 L15 7" stroke="#30b030" stroke-width="1.5"/><path d="M13 6 L16 6 L15 9Z" fill="#30b030"/><path d="M6 13 L14 18" stroke="#d02020" stroke-width="1.7"/><circle cx="6" cy="13" r="1.8" fill="#f4f4f4" stroke="#555" stroke-width="0.6"/><path d="M1 18 L7 12" stroke="#30a030" stroke-width="2"/><rect x="10" y="14" width="7" height="5" fill="#ccc" stroke="#666" stroke-width="0.6"/></svg>
<svg class="a" style="left:1104px;top:69px" width="20" height="20" viewBox="0 0 20 20"><path d="M1 13 L11 7 L20 11 L10 18Z" fill="#dde6f6" stroke="#6a7a9a" stroke-width="0.7"/><path d="M6 13 V2.5" stroke="#2a6ae0" stroke-width="1.6"/><path d="M3.8 4.5 L6 0 L8.2 4.5Z" fill="#2a6ae0"/><path d="M6 13 L15 7" stroke="#30b030" stroke-width="1.5"/><path d="M13 6 L16 6 L15 9Z" fill="#30b030"/><path d="M6 13 L14 18" stroke="#d02020" stroke-width="1.7"/><circle cx="6" cy="13" r="1.8" fill="#f4f4f4" stroke="#555" stroke-width="0.6"/><path d="M2 10 V18 H10" fill="none" stroke="#30a030" stroke-width="2.2"/></svg>
<svg class="a" style="left:1146px;top:69px" width="20" height="20" viewBox="0 0 20 20"><rect x="1" y="1" width="6" height="6" fill="#20c8f0"/><rect x="7" y="1" width="6" height="6" fill="#f0e020"/><rect x="13" y="1" width="6" height="6" fill="#20d020"/><rect x="1" y="7" width="6" height="6" fill="#f08010"/><rect x="7" y="7" width="6" height="6" fill="#a06010"/><rect x="13" y="7" width="6" height="6" fill="#e020e0"/><rect x="1" y="13" width="6" height="6" fill="#1030e0"/><rect x="7" y="13" width="6" height="6" fill="#20a020"/><rect x="13" y="13" width="6" height="6" fill="#909090"/></svg>
<svg class="a" style="left:1172px;top:69px" width="20" height="20" viewBox="0 0 20 20"><rect x="3" y="1" width="14" height="18" fill="#f4f4f4" stroke="#555" stroke-width="0.8"/><rect x="5" y="4" width="10" height="2" fill="#f0c060"/><rect x="5" y="8" width="3" height="3" fill="#30c030"/><rect x="8" y="8" width="3" height="3" fill="#e030e0"/><rect x="11" y="8" width="3" height="3" fill="#30a0f0"/><rect x="5" y="11" width="3" height="3" fill="#f0d020"/><rect x="8" y="11" width="3" height="3" fill="#2030d0"/><rect x="11" y="11" width="3" height="3" fill="#e04030"/></svg>
<svg class="a" style="left:1199px;top:69px" width="20" height="20" viewBox="0 0 20 20"><circle cx="10" cy="10" r="9" fill="#5a9a4a" stroke="#3a6a30"/><circle cx="10" cy="10" r="6.5" fill="#8ab878"/><path d="M5 5 L15 15 M15 5 L5 15" stroke="#f4f4f4" stroke-width="2.2"/></svg>
<svg class="a" style="left:1225px;top:69px" width="20" height="20" viewBox="0 0 20 20"><rect x="1" y="1" width="18" height="18" fill="#dde4f0" stroke="#4a5a7a" stroke-width="1"/><rect x="1" y="1" width="18" height="3" fill="#5a7ab0"/><path d="M6 7 L15 16 M15 7 L7 15" stroke="#5a8ad0" stroke-width="1.6"/><path d="M3 6 V17" stroke="#a08040" stroke-width="1" stroke-dasharray="1 1"/></svg>
<svg class="a" style="left:1251px;top:69px" width="20" height="20" viewBox="0 0 20 20"><rect x="2" y="3" width="15" height="15" fill="none" stroke="#2a3a90" stroke-width="1.2" stroke-dasharray="1.5 1.5"/><path d="M6 9 L14 3 L19 5 L12 12Z" fill="#e0b070" stroke="#a07030" stroke-width="0.6"/><circle cx="5" cy="15" r="1.5" fill="#f0e020"/></svg>
<svg class="a" style="left:1277px;top:69px" width="20" height="20" viewBox="0 0 20 20"><path d="M4 3 L19 2 L16 17 L1 18Z" fill="#3a60c8" stroke="#203080" stroke-width="0.8"/><path d="M6 5 L17 4 M5 9 L17 8 M4 13 L16 12 M8 3 L5 18 M12 3 L9 18" stroke="#e04050" stroke-width="0.8"/></svg>
<div class="a" style="left:60px;top:109px;width:1860px;height:892px;background:linear-gradient(#03041a 0%,#111a36 22%,#1e2b4e 42%,#2e4168 62%,#3b5480 80%,#46638e 100%)"></div>
<div class="a" style="left:0;top:108px;width:60px;height:10px;background:#4d5e7f"></div>
<svg class="a" style="left:0;top:0" width="1920" height="1048" viewBox="0 0 1920 1048" shape-rendering="crispEdges">
<defs><linearGradient id="cylg" x1="0" y1="0" x2="0" y2="1"><stop offset="0" stop-color="#8a8a8a"/><stop offset="0.3" stop-color="#c4c4c4"/><stop offset="0.6" stop-color="#9a9a9a"/><stop offset="1" stop-color="#6a6a6a"/></linearGradient><linearGradient id="vcyl" x1="0" y1="0" x2="1" y2="0"><stop offset="0" stop-color="#7a7a7a"/><stop offset="0.35" stop-color="#c8c8c8"/><stop offset="1" stop-color="#6a6a6a"/></linearGradient><radialGradient id="footg" cx="0.5" cy="0.2" r="0.9"><stop offset="0" stop-color="#e8e8e8"/><stop offset="1" stop-color="#8a8a8a"/></radialGradient></defs>
<rect x="834.5" y="838" width="5" height="23" fill="url(#vcyl)" stroke="#222" stroke-width="0.6"/><rect x="832.5" y="857" width="9" height="5" fill="#a2a2a2" stroke="#222" stroke-width="0.7"/><path d="M831 861 L843 861 L857.0 870 L817.0 870Z" fill="url(#footg)" stroke="#222" stroke-width="0.8"/><ellipse cx="837" cy="870" rx="20.0" ry="3.2" fill="#c8c8c8" stroke="#222" stroke-width="0.8"/><ellipse cx="837" cy="873" rx="19.0" ry="3" fill="#b8b8b8" stroke="#222" stroke-width="0.8"/>
<rect x="914.5" y="878" width="5" height="42" fill="url(#vcyl)" stroke="#222" stroke-width="0.6"/><rect x="913" y="902" width="8" height="5" fill="#a2a2a2" stroke="#222" stroke-width="0.7"/><rect x="912.5" y="916" width="9" height="5" fill="#a2a2a2" stroke="#222" stroke-width="0.7"/><path d="M911 920 L923 920 L935.5 929 L898.5 929Z" fill="url(#footg)" stroke="#222" stroke-width="0.8"/><ellipse cx="917" cy="929" rx="18.5" ry="3.2" fill="#c8c8c8" stroke="#222" stroke-width="0.8"/><ellipse cx="917" cy="932" rx="17.5" ry="3" fill="#b8b8b8" stroke="#222" stroke-width="0.8"/>
<rect x="1419.5" y="851" width="5" height="43" fill="url(#vcyl)" stroke="#222" stroke-width="0.6"/><rect x="1418" y="876" width="8" height="5" fill="#a2a2a2" stroke="#222" stroke-width="0.7"/><rect x="1417.5" y="890" width="9" height="5" fill="#a2a2a2" stroke="#222" stroke-width="0.7"/><path d="M1416 894 L1428 894 L1440.5 903 L1403.5 903Z" fill="url(#footg)" stroke="#222" stroke-width="0.8"/><ellipse cx="1422" cy="903" rx="18.5" ry="3.2" fill="#c8c8c8" stroke="#222" stroke-width="0.8"/><ellipse cx="1422" cy="906" rx="17.5" ry="3" fill="#b8b8b8" stroke="#222" stroke-width="0.8"/>
<polygon points="793,434 1365,409 1459.5,473 1462,852.6 888,879.4 796,812" fill="#939393" stroke="#000" stroke-width="2" stroke-linejoin="round" />
<polygon points="793,434 1365,409 1459.5,473 882,498.5" fill="#979797" stroke="#000" stroke-width="1.5" stroke-linejoin="round" />
<line x1="793" y1="434" x2="1365" y2="409" stroke="#000" stroke-width="3.5"/>
<line x1="799.2" y1="436.8" x2="886.5" y2="498.5" stroke="#000" stroke-width="1.0"/><line x1="803.5" y1="436.5" x2="890.0" y2="498.0" stroke="#000" stroke-width="1.0"/><line x1="807.8" y1="436.2" x2="893.5" y2="497.5" stroke="#000" stroke-width="1.0"/>
<line x1="806" y1="436" x2="893" y2="497" stroke="#000" stroke-width="1.6"/>
<line x1="1361.2" y1="409.5" x2="1454.6" y2="473.2" stroke="#000" stroke-width="1.0"/><line x1="1357.5" y1="410.0" x2="1449.8" y2="473.5" stroke="#000" stroke-width="1.0"/><line x1="1353.8" y1="410.5" x2="1444.9" y2="473.8" stroke="#000" stroke-width="1.0"/>
<line x1="1380" y1="419" x2="1459" y2="473" stroke="#000" stroke-width="2.2"/>
<line x1="1372" y1="424" x2="1447" y2="474" stroke="#000" stroke-width="1.0"/>
<line x1="854" y1="452" x2="860" y2="452" stroke="#000" stroke-width="2"/>
<line x1="1315" y1="484" x2="1321" y2="484" stroke="#000" stroke-width="2"/>
<polygon points="793,434 882,498.5 888,879.4 796,812" fill="#939393" stroke="#000" stroke-width="1.5" stroke-linejoin="round" />
<rect x="793" y="434" width="10" height="378" fill="#a2a2a2" stroke="#000" stroke-width="1.4"/>
<line x1="797" y1="437" x2="798" y2="810" stroke="#000" stroke-width="1.0"/>
<line x1="800" y1="437" x2="801" y2="810" stroke="#000" stroke-width="0.8"/>
<line x1="796.2" y1="442.8" x2="882.0" y2="505.0" stroke="#000" stroke-width="1.3"/><line x1="796.4" y1="446.6" x2="882.0" y2="509.0" stroke="#000" stroke-width="1.3"/><line x1="796.6" y1="450.4" x2="882.0" y2="513.0" stroke="#000" stroke-width="1.3"/><line x1="796.8" y1="454.2" x2="882.0" y2="517.0" stroke="#000" stroke-width="1.3"/>
<line x1="797" y1="458" x2="882" y2="521" stroke="#000" stroke-width="1.2"/>
<line x1="812" y1="452" x2="812" y2="480" stroke="#000" stroke-width="0.8"/>
<rect x="875" y="533" width="6" height="190" fill="#9c9c9c" stroke="#000" stroke-width="0.9"/>
<ellipse cx="823" cy="520" rx="1.6" ry="2.5" fill="#2a3450" stroke="#000" stroke-width="0.4"/>
<rect x="805" y="480.6" width="18.5" height="151" fill="#a2a2a2" stroke="#000" stroke-width="1.2"/>
<rect x="805" y="480.6" width="18.5" height="5" fill="#b0b0b0" stroke="#000" stroke-width="0.8"/>
<rect x="805" y="626" width="18.5" height="6" fill="#b0b0b0" stroke="#000" stroke-width="0.8"/>
<rect x="810" y="632" width="8" height="85" fill="url(#vcyl)" stroke="#000" stroke-width="0.9"/>
<line x1="803" y1="700" x2="803" y2="716" stroke="#000" stroke-width="1.5"/>
<polygon points="801.7,717.8 852,715.6 881.8,733 881.8,776.2" fill="#9c9c9c" stroke="#000" stroke-width="1.0" stroke-linejoin="round" />
<line x1="801.7" y1="717.8" x2="881.8" y2="776.2" stroke="#000" stroke-width="1.4"/>
<line x1="803" y1="721" x2="881.8" y2="779" stroke="#000" stroke-width="0.9"/>
<polygon points="803,720 881.8,778 885,864 803,800" fill="#999" stroke="#000" stroke-width="0.8" stroke-linejoin="round" />
<polygon points="858.3,641 876,641 876,672 858.3,665" fill="#939393" stroke="#000" stroke-width="1.0" stroke-linejoin="round" />
<polygon points="858.3,641 868,641 876,648 866,648" fill="#a2a2a2" stroke="#000" stroke-width="0.7" stroke-linejoin="round" />
<line x1="860" y1="652" x2="876" y2="657" stroke="#000" stroke-width="0.8"/>
<rect x="862" y="645" width="6" height="3" fill="#333" stroke="#000" stroke-width="0.4"/>
<polygon points="857.6,676 862,673.4 882,673.4 882,707 875,707 857.6,692" fill="#939393" stroke="#000" stroke-width="1.0" stroke-linejoin="round" />
<line x1="857.6" y1="681" x2="876" y2="688" stroke="#000" stroke-width="0.8"/>
<line x1="857.6" y1="686" x2="876" y2="694" stroke="#000" stroke-width="0.8"/>
<line x1="875" y1="688" x2="875" y2="707" stroke="#000" stroke-width="0.8"/>
<polygon points="852.2,709.3 880,709.3 883.5,717 876,722 852.2,712" fill="#9c9c9c" stroke="#000" stroke-width="1.0" stroke-linejoin="round" />
<polygon points="852.2,712 876,722 876,762 852.2,748" fill="#939393" stroke="#000" stroke-width="1.0" stroke-linejoin="round" />
<polygon points="876,722 883.5,717 883.5,762 876,762" fill="#858585" stroke="#000" stroke-width="0.9" stroke-linejoin="round" />
<line x1="852.2" y1="737" x2="876" y2="748" stroke="#000" stroke-width="0.8"/>
<circle cx="879.5" cy="744.4" r="1.6" fill="#939393" stroke="#000" stroke-width="0.6"/>
<circle cx="879.5" cy="756.6" r="1.6" fill="#939393" stroke="#000" stroke-width="0.6"/>
<polygon points="796,799 888,864 888,879.4 796,812" fill="#939393" stroke="#000" stroke-width="1.3" stroke-linejoin="round" />
<line x1="796" y1="799" x2="888" y2="864" stroke="#000" stroke-width="1.6"/>
<polygon points="929,542 1152.8,532.3 1153.8,829.7 931.6,840" fill="#919191" stroke="#000" stroke-width="0.8" stroke-linejoin="round" />
<polygon points="1194.4,530 1419,519.3 1420.5,818.6 1197,826" fill="#929292" stroke="#000" stroke-width="0.8" stroke-linejoin="round" />
<polygon points="931,541 946,541 946,840 932,840" fill="#999" stroke="#000" stroke-width="1.0" stroke-linejoin="round" />
<line x1="936" y1="545" x2="936" y2="838" stroke="#000" stroke-width="0.8"/>
<line x1="941" y1="545" x2="941" y2="740" stroke="#000" stroke-width="0.8"/>
<ellipse cx="941" cy="604" rx="1.5" ry="3" fill="#2a3450" stroke="#000" stroke-width="0.5"/>
<ellipse cx="941" cy="626" rx="1.5" ry="3" fill="#2a3450" stroke="#000" stroke-width="0.5"/>
<polygon points="931,638 950,638 957,645 957,670 931,670" fill="#939393" stroke="#000" stroke-width="1.0" stroke-linejoin="round" />
<line x1="931" y1="645" x2="957" y2="645" stroke="#000" stroke-width="0.8"/>
<line x1="931" y1="660" x2="957" y2="662" stroke="#000" stroke-width="0.8"/>
<polygon points="931,670 955,670 967,680 967,705 931,705" fill="#939393" stroke="#000" stroke-width="1.0" stroke-linejoin="round" />
<line x1="931" y1="684" x2="967" y2="688" stroke="#000" stroke-width="0.8"/>
<line x1="931" y1="690" x2="967" y2="694" stroke="#000" stroke-width="0.8"/>
<polygon points="1034,538 1100,535.7 1100,556 1060,557" fill="#939393" stroke="#000" stroke-width="1.0" stroke-linejoin="round" />
<circle cx="1069" cy="549" r="2.6" fill="#939393" stroke="#000" stroke-width="0.8"/>
<circle cx="1087" cy="549" r="3.2" fill="#939393" stroke="#000" stroke-width="0.9"/>
<circle cx="1087" cy="549" r="1.5" fill="#939393" stroke="#000" stroke-width="0.6"/>
<polygon points="1053,539 1062,539 1065,569 1056,569" fill="#a2a2a2" stroke="#000" stroke-width="0.9" stroke-linejoin="round" />
<polygon points="970,541.5 1031.6,538.6 1054.5,557.2 998.7,560" fill="#9a9a9a" stroke="#000" stroke-width="1.1" stroke-linejoin="round" />
<polygon points="998.7,560 1054.5,557.2 1054.5,568.7 998.7,569.4" fill="#939393" stroke="#000" stroke-width="1.1" stroke-linejoin="round" />
<polygon points="970,541.5 998.7,560 998.7,569.4 970,550" fill="#858585" stroke="#000" stroke-width="1.0" stroke-linejoin="round" />
<rect x="1013" y="541" width="20" height="16" rx="3" fill="url(#vcyl)" stroke="#000" stroke-width="0.9"/>
<ellipse cx="1023" cy="541" rx="10" ry="3" fill="#a2a2a2" stroke="#000" stroke-width="0.8"/>
<polygon points="1060.2,565.8 1097.4,565 1097.4,610.2 1064.5,614.5" fill="#979797" stroke="#000" stroke-width="1.1" stroke-linejoin="round" />
<ellipse cx="1089.6" cy="580.8" rx="3" ry="8" fill="#939393" stroke="#000" stroke-width="0.9"/>
<rect x="1058" y="568" width="8" height="40" fill="url(#vcyl)" stroke="#000" stroke-width="0.8"/>
<polygon points="1046,570 1068,568 1068,582 1046,584" fill="#939393" stroke="#000" stroke-width="0.9" stroke-linejoin="round" />
<circle cx="1063" cy="606" r="3" fill="#939393" stroke="#000" stroke-width="0.8"/>
<polygon points="981.5,567.2 1040,566.5 1067.4,574.4 1005.8,582.3" fill="#9a9a9a" stroke="#000" stroke-width="1.1" stroke-linejoin="round" />
<polygon points="1005.8,582.3 1067.4,574.4 1067.4,583 1005.8,591.6" fill="#939393" stroke="#000" stroke-width="1.1" stroke-linejoin="round" />
<polygon points="981.5,567.2 1005.8,582.3 1005.8,591.6 981.5,576" fill="#858585" stroke="#000" stroke-width="1.0" stroke-linejoin="round" />
<rect x="1017" y="573" width="12" height="10" fill="url(#vcyl)" stroke="#000" stroke-width="0.8"/>
<polygon points="978.6,595.9 1040,591.6 1064.5,614.5 1007.2,617.3" fill="#9a9a9a" stroke="#000" stroke-width="1.1" stroke-linejoin="round" />
<polygon points="1007.2,617.3 1064.5,614.5 1064.5,621.6 1007.2,622.3" fill="#939393" stroke="#000" stroke-width="1.1" stroke-linejoin="round" />
<polygon points="978.6,595.9 1007.2,617.3 1007.2,622.3 978.6,600" fill="#858585" stroke="#000" stroke-width="1.0" stroke-linejoin="round" />
<rect x="983" y="582" width="11" height="18" fill="#939393" stroke="#000" stroke-width="0.9"/>
<circle cx="989" cy="590" r="2.5" fill="#939393" stroke="#000" stroke-width="0.7"/>
<rect x="1002" y="596" width="12" height="20" fill="#939393" stroke="#000" stroke-width="0.9"/>
<circle cx="1008" cy="605" r="2.5" fill="#939393" stroke="#000" stroke-width="0.7"/>
<rect x="1004" y="598" width="8" height="5" fill="#5a5a5a" stroke="#000" stroke-width="0.5"/>
<polygon points="1022,622 1043,622 1043,640" fill="url(#cylg)" stroke="#000" stroke-width="0.6" stroke-linejoin="round" />
<rect x="1043" y="617" width="17" height="23" fill="#939393" stroke="#000" stroke-width="1.0"/>
<circle cx="1052" cy="635" r="3" fill="#939393" stroke="#000" stroke-width="0.8"/>
<g transform="translate(1103,600) rotate(23.39)"><ellipse cx="0" cy="0" rx="4.50" ry="9" fill="url(#cylg)" stroke="#000" stroke-width="1"/><rect x="0" y="-9" width="40.31" height="18" fill="url(#cylg)"/><path d="M0 -9 H40.31 M0 9 H40.31" stroke="#000" stroke-width="1"/><ellipse cx="40.31" cy="0" rx="5.10" ry="6" fill="#939393" stroke="#000" stroke-width="1.3"/></g>
<g transform="translate(1118,606) rotate(23.63)"><ellipse cx="0" cy="0" rx="5.50" ry="11" fill="url(#cylg)" stroke="#000" stroke-width="1"/><rect x="0" y="-11" width="34.93" height="22" fill="url(#cylg)"/><path d="M0 -11 H34.93 M0 11 H34.93" stroke="#000" stroke-width="1"/><ellipse cx="34.93" cy="0" rx="9.35" ry="11" fill="#939393" stroke="#000" stroke-width="1.3"/></g>
<rect x="1103" y="576" width="17" height="10" fill="#777" stroke="#000" stroke-width="0.9"/>
<line x1="1107" y1="576" x2="1107" y2="586" stroke="#000" stroke-width="1.2"/>
<line x1="1111.5" y1="576" x2="1111.5" y2="586" stroke="#000" stroke-width="1.2"/>
<line x1="1116" y1="576" x2="1116" y2="586" stroke="#000" stroke-width="1.2"/>
<polygon points="1060,616 1123,610 1123,637 1060,641.7" fill="#939393" stroke="#000" stroke-width="1.0" stroke-linejoin="round" />
<rect x="1067" y="622" width="45" height="7" rx="3.5" fill="#a0a0a0" stroke="#000" stroke-width="0.8" transform="rotate(-6 1089 625)"/>
<polygon points="1020,634.5 1117.5,628.8 1117.5,640.2 1034.4,643" fill="#9a9a9a" stroke="#000" stroke-width="1.1" stroke-linejoin="round" />
<polygon points="1034.4,643 1117.5,640.2 1117.5,651.7 1034.4,654.5" fill="#939393" stroke="#000" stroke-width="1.1" stroke-linejoin="round" />
<polygon points="1020,634.5 1034.4,643 1034.4,654.5 1020,646" fill="#858585" stroke="#000" stroke-width="1.0" stroke-linejoin="round" />
<polygon points="1055,645 1098,643 1098,648 1055,650" fill="#7a7a7a" stroke="#000" stroke-width="0.8" stroke-linejoin="round" />
<polygon points="1019.4,662 1118,658 1118,665 1034.7,670.5" fill="#9a9a9a" stroke="#000" stroke-width="1.0" stroke-linejoin="round" />
<polygon points="1034.7,670.5 1118,665 1118,683.6 1034.7,685.8" fill="#939393" stroke="#000" stroke-width="1.1" stroke-linejoin="round" />
<polygon points="1019.4,662 1034.7,670.5 1034.7,685.8 1019.4,676" fill="#858585" stroke="#000" stroke-width="1.0" stroke-linejoin="round" />
<path d="M1057 664 Q1076 660 1094 663 L1094 673 Q1076 676 1057 675Z" fill="url(#cylg)" stroke="#000" stroke-width="0.8"/>
<circle cx="1046.8" cy="673" r="4" fill="#939393" stroke="#000" stroke-width="0.9"/>
<circle cx="1108.2" cy="670" r="4" fill="#939393" stroke="#000" stroke-width="0.9"/>
<polygon points="1018.3,676 1117,672 1126.9,684 1044.6,690" fill="#9a9a9a" stroke="#000" stroke-width="1.0" stroke-linejoin="round" />
<polygon points="1044.6,690 1126.9,684 1126.9,690.2 1044.6,697" fill="#939393" stroke="#000" stroke-width="1.0" stroke-linejoin="round" />
<polygon points="1018.3,676 1044.6,690 1044.6,697 1018.3,682" fill="#858585" stroke="#000" stroke-width="1.0" stroke-linejoin="round" />
<rect x="1072" y="690" width="28" height="18" fill="#939393" stroke="#000" stroke-width="1.0"/>
<circle cx="1086" cy="696" r="2" fill="#939393" stroke="#000" stroke-width="0.7"/>
<rect x="1065.4" y="705.6" width="41.6" height="24" fill="#939393" stroke="#000" stroke-width="1.1"/>
<line x1="1065.4" y1="713" x2="1107" y2="713" stroke="#000" stroke-width="0.8"/>
<polygon points="1107,700 1130,700 1141,710 1141,727.5 1107,729.7" fill="#939393" stroke="#000" stroke-width="1.0" stroke-linejoin="round" />
<line x1="1107" y1="710" x2="1141" y2="710" stroke="#000" stroke-width="0.8"/>
<polygon points="945.8,704.5 1056.7,701.2 1148.8,733 930.5,742.9" fill="#979797" stroke="#000" stroke-width="1.1" stroke-linejoin="round" />
<polygon points="947,720.5 1048,718 1048,724 947,727.5" fill="#222" stroke="#000" stroke-width="0.8" stroke-linejoin="round" />
<line x1="947" y1="723" x2="1048" y2="720.5" stroke="#888" stroke-width="0.8"/>
<polygon points="931,705 945.8,704.5 945.8,740 931,742.9" fill="#939393" stroke="#000" stroke-width="0.9" stroke-linejoin="round" />
<polygon points="930.5,743 1148.8,733 1142,749.5 930.5,758" fill="#939393" stroke="#000" stroke-width="1.2" stroke-linejoin="round" />
<circle cx="951.3" cy="753" r="1.6" fill="#939393" stroke="#000" stroke-width="0.7"/>
<circle cx="1064.3" cy="747.7" r="1.6" fill="#939393" stroke="#000" stroke-width="0.7"/>
<circle cx="1137.9" cy="745" r="1.6" fill="#939393" stroke="#000" stroke-width="0.7"/>
<polygon points="930.5,758 972.2,757 990.8,771.4 930.5,773.6" fill="#9a9a9a" stroke="#000" stroke-width="1.0" stroke-linejoin="round" />
<polygon points="930.5,773.6 990.8,771.4 990.8,785.7 930.5,788" fill="#939393" stroke="#000" stroke-width="1.0" stroke-linejoin="round" />
<rect x="931.6" y="788" width="23" height="49" fill="#939393" stroke="#000" stroke-width="1.0"/>
<line x1="943.5" y1="788" x2="943.5" y2="837" stroke="#000" stroke-width="0.9"/>
<line x1="954.6" y1="819.7" x2="1046.8" y2="816.4" stroke="#000" stroke-width="0.9"/>
<rect x="1030.3" y="753.9" width="16.5" height="48" fill="#939393" stroke="#000" stroke-width="1.0"/>
<rect x="1046.8" y="751.7" width="34" height="79" fill="#999" stroke="#000" stroke-width="1.1"/>
<line x1="1069.8" y1="752" x2="1069.8" y2="830" stroke="#000" stroke-width="0.9"/>
<rect x="1080.8" y="750.6" width="47" height="18.6" fill="#939393" stroke="#000" stroke-width="1.0"/>
<rect x="1082" y="769.2" width="43.8" height="52.7" fill="#939393" stroke="#000" stroke-width="1.1"/>
<line x1="1087.4" y1="771" x2="1087.4" y2="820" stroke="#000" stroke-width="1.6"/>
<line x1="1094" y1="771" x2="1094" y2="820" stroke="#000" stroke-width="0.9"/>
<line x1="1118" y1="771" x2="1118" y2="820" stroke="#000" stroke-width="0.9"/>
<line x1="1123.6" y1="771" x2="1123.6" y2="820" stroke="#000" stroke-width="1.6"/>
<line x1="1046.8" y1="816" x2="1151" y2="812" stroke="#000" stroke-width="0.9"/>
<polygon points="1389.6,520 1416,519 1417,815 1390,815" fill="#9c9c9c" stroke="#000" stroke-width="1.0" stroke-linejoin="round" />
<line x1="1414.5" y1="522" x2="1415.5" y2="815" stroke="#000" stroke-width="3"/>
<polygon points="1197,810 1390,803 1417,815 1197,826" fill="#959595" stroke="#000" stroke-width="0.9" stroke-linejoin="round" />
<polygon points="1379.7,696.9 1389.6,696.9 1403.3,705.6 1416,790 1416,817 1381.5,806" fill="#a0a0a0" stroke="#000" stroke-width="1.0" stroke-linejoin="round" />
<polyline points="1389.6,696.9 1392,705 1405,792 1405,815" fill="none" stroke="#000" stroke-width="1.0" stroke-linejoin="round"/>
<rect x="1195" y="530.5" width="14.2" height="69" fill="#939393" stroke="#000" stroke-width="1.0"/>
<rect x="1195" y="575.8" width="12.4" height="13.6" fill="#939393" stroke="#000" stroke-width="0.8"/>
<polygon points="1209.2,530 1244.6,528.7 1244.6,562 1209.2,562" fill="#939393" stroke="#000" stroke-width="1.0" stroke-linejoin="round" />
<rect x="1210" y="542.3" width="22.4" height="8.7" fill="url(#cylg)" stroke="#000" stroke-width="0.7"/>
<rect x="1232.8" y="537.4" width="11.8" height="17.3" fill="#5a5a5a" stroke="#000" stroke-width="0.8"/>
<rect x="1235" y="540" width="7" height="11" fill="#939393" stroke="#000" stroke-width="0.6"/>
<rect x="1244.6" y="528" width="19.8" height="46.6" fill="#939393" stroke="#000" stroke-width="1.1"/>
<line x1="1249" y1="529" x2="1249" y2="574" stroke="#000" stroke-width="0.8"/>
<polygon points="1264.4,527.4 1293,527 1293,554.7 1264.4,554.7" fill="#939393" stroke="#000" stroke-width="1.0" stroke-linejoin="round" />
<polygon points="1274,527.4 1293,527.4 1293,540" fill="url(#cylg)" stroke="#000" stroke-width="0.5" stroke-linejoin="round" />
<rect x="1270.6" y="534.9" width="22.4" height="19.8" fill="#939393" stroke="#000" stroke-width="0.9"/>
<rect x="1265.6" y="541.7" width="11" height="7.4" fill="url(#cylg)" stroke="#000" stroke-width="0.6"/>
<polygon points="1206,555.3 1228.4,564.6 1228.4,580.8 1206,570.8" fill="#a2a2a2" stroke="#000" stroke-width="1.0" stroke-linejoin="round" />
<line x1="1206" y1="559.5" x2="1222" y2="566" stroke="#000" stroke-width="0.7"/>
<line x1="1206" y1="563.5" x2="1222" y2="570" stroke="#000" stroke-width="0.7"/>
<line x1="1206" y1="567.5" x2="1222" y2="574" stroke="#000" stroke-width="0.7"/>
<rect x="1222" y="565" width="6.4" height="15.8" fill="#939393" stroke="#000" stroke-width="0.9"/>
<polygon points="1206,571 1228,581 1236,578 1236,585 1228,588 1206,578" fill="#939393" stroke="#000" stroke-width="0.8" stroke-linejoin="round" />
<polygon points="1261.3,552.9 1284.2,562.2 1284.2,577.7 1261.3,568.4" fill="#a2a2a2" stroke="#000" stroke-width="1.0" stroke-linejoin="round" />
<line x1="1261.3" y1="557" x2="1277" y2="563.5" stroke="#000" stroke-width="0.7"/>
<line x1="1261.3" y1="561" x2="1277" y2="567.5" stroke="#000" stroke-width="0.7"/>
<line x1="1261.3" y1="565" x2="1277" y2="571.5" stroke="#000" stroke-width="0.7"/>
<rect x="1278" y="562" width="6.4" height="15.8" fill="#939393" stroke="#000" stroke-width="0.9"/>
<polygon points="1226,589 1236,581 1276,576 1287,584 1287,624 1277,628 1276,635.3 1237,636.6 1232,630 1226,627" fill="#959595" stroke="#000" stroke-width="1.1" stroke-linejoin="round" />
<circle cx="1256.3" cy="605.6" r="11.2" fill="#939393" stroke="#000" stroke-width="1.0"/>
<rect x="1203" y="603" width="22" height="5" fill="url(#cylg)" stroke="#000" stroke-width="0.6"/>
<polygon points="1208.6,611.8 1226,620 1236,628 1226,628 1208.6,620" fill="#939393" stroke="#000" stroke-width="0.8" stroke-linejoin="round" />
<circle cx="1307.2" cy="539.2" r="13.6" fill="#929292" stroke="#000" stroke-width="1.0"/>
<circle cx="1307.2" cy="539.2" r="10.5" fill="#939393" stroke="#000" stroke-width="0.8"/>
<circle cx="1307.2" cy="539.2" r="4.3" fill="#939393" stroke="#000" stroke-width="0.8"/>
<polygon points="1325,587 1350,581 1353,597 1338,602" fill="#a6a6a6" stroke="#000" stroke-width="0.9" stroke-linejoin="round" />
<g transform="translate(1325,561) rotate(36.24)"><ellipse cx="0" cy="0" rx="5.50" ry="11" fill="url(#cylg)" stroke="#000" stroke-width="1"/><rect x="0" y="-11" width="41.78" height="22" fill="url(#cylg)"/><path d="M0 -11 H41.78 M0 11 H41.78" stroke="#000" stroke-width="1"/><ellipse cx="41.78" cy="0" rx="8.50" ry="10" fill="#939393" stroke="#000" stroke-width="1.3"/></g>
<polygon points="1361,576 1378,571 1398,588 1386,601" fill="#a8a8a8" stroke="#000" stroke-width="0.9" stroke-linejoin="round" />
<g transform="translate(1382,584) rotate(41.99)"><ellipse cx="0" cy="0" rx="3.50" ry="7" fill="url(#cylg)" stroke="#000" stroke-width="1"/><rect x="0" y="-7" width="13.45" height="14" fill="url(#cylg)"/><path d="M0 -7 H13.45 M0 7 H13.45" stroke="#000" stroke-width="1"/><ellipse cx="13.45" cy="0" rx="5.95" ry="7" fill="#939393" stroke="#000" stroke-width="1.3"/></g>
<ellipse cx="1388" cy="609" rx="7" ry="4" fill="#333" stroke="#000" stroke-width="0.8"/>
<g transform="translate(1199,650) rotate(31.10)"><ellipse cx="0" cy="0" rx="7.50" ry="15" fill="url(#cylg)" stroke="#000" stroke-width="1"/><rect x="0" y="-15" width="73.57" height="30" fill="url(#cylg)"/><path d="M0 -15 H73.57 M0 15 H73.57" stroke="#000" stroke-width="1"/><ellipse cx="73.57" cy="0" rx="12.75" ry="15" fill="#939393" stroke="#000" stroke-width="1.3"/></g>
<g transform="translate(1199,674) rotate(34.19)"><ellipse cx="0" cy="0" rx="7.50" ry="15" fill="url(#cylg)" stroke="#000" stroke-width="1"/><rect x="0" y="-15" width="64.07" height="30" fill="url(#cylg)"/><path d="M0 -15 H64.07 M0 15 H64.07" stroke="#000" stroke-width="1"/><ellipse cx="64.07" cy="0" rx="11.90" ry="14" fill="#939393" stroke="#000" stroke-width="1.3"/></g>
<circle cx="1200" cy="652" r="13" fill="#929292" stroke="#000" stroke-width="1.0"/>
<circle cx="1200" cy="652" r="8" fill="#939393" stroke="#000" stroke-width="0.8"/>
<rect x="1221.6" y="651" width="31" height="58.3" rx="15" fill="#959595" stroke="#000" stroke-width="1.1"/>
<circle cx="1237.7" cy="659.7" r="2.6" fill="#777" stroke="#000" stroke-width="0.7"/>
<circle cx="1228.4" cy="674" r="2.6" fill="#777" stroke="#000" stroke-width="0.7"/>
<circle cx="1247.7" cy="673.3" r="2.6" fill="#777" stroke="#000" stroke-width="0.7"/>
<circle cx="1237.7" cy="696.3" r="10" fill="#939393" stroke="#000" stroke-width="1.0"/>
<circle cx="1237.7" cy="696.3" r="6.5" fill="#939393" stroke="#000" stroke-width="0.9"/>
<rect x="1254.5" y="677" width="31" height="59.6" rx="15" fill="#959595" stroke="#000" stroke-width="1.1"/>
<circle cx="1262" cy="716.7" r="2.6" fill="#777" stroke="#000" stroke-width="0.7"/>
<circle cx="1281" cy="716" r="2.6" fill="#777" stroke="#000" stroke-width="0.7"/>
<circle cx="1271" cy="730.4" r="2.6" fill="#777" stroke="#000" stroke-width="0.7"/>
<polygon points="1276.8,690.7 1322.7,688.2 1323.3,695.6 1281.8,700.6" fill="#a4a4a4" stroke="#000" stroke-width="0.9" stroke-linejoin="round" />
<circle cx="1278" cy="698.7" r="6" fill="#a2a2a2" stroke="#000" stroke-width="0.9"/>
<circle cx="1278" cy="698.7" r="3" fill="#939393" stroke="#000" stroke-width="0.7"/>
<g transform="translate(1316,667) rotate(29.56)"><ellipse cx="0" cy="0" rx="6.50" ry="13" fill="url(#cylg)" stroke="#000" stroke-width="1"/><rect x="0" y="-13" width="45.41" height="26" fill="url(#cylg)"/><path d="M0 -13 H45.41 M0 13 H45.41" stroke="#000" stroke-width="1"/><ellipse cx="45.41" cy="0" rx="11.56" ry="13.6" fill="#939393" stroke="#000" stroke-width="1.3"/></g>
<path d="M1347 690 Q1360 696 1373 688" fill="none" stroke="#d0d0d0" stroke-width="1.8"/>
<polygon points="882,498.5 1459.5,473 1439.5,499.5 911,524.4" fill="#979797" stroke="#000" stroke-width="1.6" stroke-linejoin="round" />
<line x1="882" y1="499" x2="1459.5" y2="473.5" stroke="#000" stroke-width="3.6"/>
<line x1="889.2" y1="505.0" x2="1454.5" y2="479.6" stroke="#000" stroke-width="2.0"/><line x1="895.0" y1="510.2" x2="1450.5" y2="484.9" stroke="#000" stroke-width="2.0"/><line x1="900.3" y1="514.8" x2="1446.9" y2="489.7" stroke="#000" stroke-width="2.0"/><line x1="905.2" y1="519.2" x2="1443.5" y2="494.2" stroke="#000" stroke-width="2.0"/>
<rect x="925" y="521.8" width="2" height="1.4" fill="#d0d0d0"/>
<rect x="945" y="520.9" width="2" height="1.4" fill="#d0d0d0"/>
<rect x="965" y="519.9" width="2" height="1.4" fill="#d0d0d0"/>
<rect x="985" y="519.0" width="2" height="1.4" fill="#d0d0d0"/>
<rect x="1005" y="518.0" width="2" height="1.4" fill="#d0d0d0"/>
<rect x="1025" y="517.1" width="2" height="1.4" fill="#d0d0d0"/>
<rect x="1045" y="516.1" width="2" height="1.4" fill="#d0d0d0"/>
<rect x="1065" y="515.2" width="2" height="1.4" fill="#d0d0d0"/>
<rect x="1085" y="514.3" width="2" height="1.4" fill="#d0d0d0"/>
<rect x="1105" y="513.3" width="2" height="1.4" fill="#d0d0d0"/>
<rect x="1125" y="512.4" width="2" height="1.4" fill="#d0d0d0"/>
<rect x="1145" y="511.4" width="2" height="1.4" fill="#d0d0d0"/>
<rect x="1165" y="510.5" width="2" height="1.4" fill="#d0d0d0"/>
<rect x="1185" y="509.5" width="2" height="1.4" fill="#d0d0d0"/>
<rect x="1205" y="508.6" width="2" height="1.4" fill="#d0d0d0"/>
<rect x="1225" y="507.6" width="2" height="1.4" fill="#d0d0d0"/>
<rect x="1245" y="506.7" width="2" height="1.4" fill="#d0d0d0"/>
<rect x="1265" y="505.7" width="2" height="1.4" fill="#d0d0d0"/>
<rect x="1285" y="504.8" width="2" height="1.4" fill="#d0d0d0"/>
<rect x="1305" y="503.8" width="2" height="1.4" fill="#d0d0d0"/>
<rect x="1325" y="502.9" width="2" height="1.4" fill="#d0d0d0"/>
<rect x="1345" y="501.9" width="2" height="1.4" fill="#d0d0d0"/>
<rect x="1365" y="501.0" width="2" height="1.4" fill="#d0d0d0"/>
<rect x="1385" y="500.0" width="2" height="1.4" fill="#d0d0d0"/>
<rect x="1405" y="499.1" width="2" height="1.4" fill="#d0d0d0"/>
<rect x="1425" y="498.1" width="2" height="1.4" fill="#d0d0d0"/>
<rect x="1445" y="497.2" width="2" height="1.4" fill="#d0d0d0"/>
<line x1="911" y1="524.4" x2="1439.5" y2="499.5" stroke="#000" stroke-width="3.2"/>
<polygon points="881,498 911,498 911,879 886,879" fill="#999999" stroke="#000" stroke-width="1.5" stroke-linejoin="round" />
<line x1="883.5" y1="500" x2="885.0" y2="870" stroke="#000" stroke-width="2.6"/>
<line x1="890" y1="500" x2="891.5" y2="870" stroke="#000" stroke-width="1.6"/>
<line x1="896" y1="500" x2="897.5" y2="870" stroke="#000" stroke-width="2.4"/>
<line x1="903" y1="500" x2="904.5" y2="870" stroke="#000" stroke-width="1.4"/>
<line x1="909.5" y1="500" x2="911.0" y2="870" stroke="#000" stroke-width="2.8"/>
<polygon points="1439.5,473 1460.5,473 1462,838 1441,838" fill="#999999" stroke="#000" stroke-width="1.5" stroke-linejoin="round" />
<line x1="1441" y1="476" x2="1441.8" y2="830" stroke="#000" stroke-width="2.6"/>
<line x1="1447" y1="476" x2="1447.8" y2="830" stroke="#000" stroke-width="1.4"/>
<line x1="1451" y1="476" x2="1451.8" y2="830" stroke="#000" stroke-width="2.4"/>
<line x1="1456" y1="476" x2="1456.8" y2="830" stroke="#000" stroke-width="1.4"/>
<line x1="1460.5" y1="476" x2="1461.3" y2="830" stroke="#000" stroke-width="2.2"/>
<rect x="1442" y="829.7" width="21" height="8" fill="#939393" stroke="#000" stroke-width="1.0"/>
<polygon points="888,864 1462,838 1462,852.6 888,879.4" fill="#979797" stroke="#000" stroke-width="1.6" stroke-linejoin="round" />
<line x1="886" y1="864" x2="1462" y2="838" stroke="#000" stroke-width="2.6"/>
<rect x="885" y="852" width="26" height="12" fill="#939393" stroke="#000" stroke-width="1.0"/>
<polygon points="911,524.4 1173,512 1152.8,532.3 929,542" fill="#959595" stroke="#000" stroke-width="1.0" stroke-linejoin="round" />
<polygon points="911,524.4 929,542 931.6,840 911,862.5" fill="#969696" stroke="#000" stroke-width="1.0" stroke-linejoin="round" />
<polygon points="911,862.5 931.6,840 1153.8,829.7 1174,849" fill="#959595" stroke="#000" stroke-width="1.0" stroke-linejoin="round" />
<polygon points="1173,512 1174,849 1153.8,829.7 1152.8,532.3" fill="#969696" stroke="#000" stroke-width="1.0" stroke-linejoin="round" />
<line x1="931.6" y1="840" x2="1153.8" y2="829.7" stroke="#000" stroke-width="3.2"/>
<line x1="1152.8" y1="532.3" x2="1153.8" y2="829.7" stroke="#000" stroke-width="3.2"/>
<line x1="929" y1="542" x2="1152.8" y2="532.3" stroke="#000" stroke-width="2.2"/>
<line x1="911" y1="862.5" x2="1174" y2="849" stroke="#000" stroke-width="3.0"/>
<polygon points="1174,512 1436.5,499.5 1419,519.3 1194.4,530" fill="#959595" stroke="#000" stroke-width="1.0" stroke-linejoin="round" />
<polygon points="1174,512 1194.4,530 1197,826 1174,849" fill="#969696" stroke="#000" stroke-width="1.0" stroke-linejoin="round" />
<polygon points="1174,849 1197,826 1420.5,818.6 1439.5,837.3" fill="#959595" stroke="#000" stroke-width="1.0" stroke-linejoin="round" />
<polygon points="1436.5,499.5 1439.5,837.3 1420.5,818.6 1419,519.3" fill="#969696" stroke="#000" stroke-width="1.0" stroke-linejoin="round" />
<line x1="1197" y1="826" x2="1420.5" y2="818.6" stroke="#000" stroke-width="3.2"/>
<line x1="1419" y1="519.3" x2="1420.5" y2="818.6" stroke="#000" stroke-width="3.2"/>
<line x1="1194.4" y1="530" x2="1419" y2="519.3" stroke="#000" stroke-width="2.2"/>
<line x1="1174" y1="849" x2="1439.5" y2="837.3" stroke="#000" stroke-width="3.0"/>
<line x1="1173.5" y1="512" x2="1174.5" y2="849" stroke="#000" stroke-width="3.2"/>
<rect x="915" y="861.322" width="3" height="1.6" fill="#ccc"/>
<rect x="939" y="860.254" width="3" height="1.6" fill="#ccc"/>
<rect x="963" y="859.186" width="3" height="1.6" fill="#ccc"/>
<rect x="987" y="858.118" width="3" height="1.6" fill="#ccc"/>
<rect x="1011" y="857.05" width="3" height="1.6" fill="#ccc"/>
<rect x="1035" y="855.982" width="3" height="1.6" fill="#ccc"/>
<rect x="1059" y="854.914" width="3" height="1.6" fill="#ccc"/>
<rect x="1083" y="853.846" width="3" height="1.6" fill="#ccc"/>
<rect x="1107" y="852.778" width="3" height="1.6" fill="#ccc"/>
<rect x="1131" y="851.71" width="3" height="1.6" fill="#ccc"/>
<rect x="1155" y="850.642" width="3" height="1.6" fill="#ccc"/>
<rect x="1179" y="849.574" width="3" height="1.6" fill="#ccc"/>
<rect x="1203" y="848.506" width="3" height="1.6" fill="#ccc"/>
<rect x="1227" y="847.438" width="3" height="1.6" fill="#ccc"/>
<rect x="1251" y="846.37" width="3" height="1.6" fill="#ccc"/>
<rect x="1275" y="845.302" width="3" height="1.6" fill="#ccc"/>
<rect x="1299" y="844.234" width="3" height="1.6" fill="#ccc"/>
<rect x="1323" y="843.166" width="3" height="1.6" fill="#ccc"/>
<rect x="1347" y="842.098" width="3" height="1.6" fill="#ccc"/>
<rect x="1371" y="841.03" width="3" height="1.6" fill="#ccc"/>
<rect x="1395" y="839.962" width="3" height="1.6" fill="#ccc"/>
<rect x="1419" y="838.894" width="3" height="1.6" fill="#ccc"/>
<polygon points="983,465 1030,463 1043,472 995,475" fill="#858585" stroke="#000" stroke-width="1.0" stroke-linejoin="round" />
<polygon points="988,466 1028,464 1036,471 996,473" fill="#7a7a7a" stroke="#000" stroke-width="0.6" stroke-linejoin="round" />
<rect x="998" y="452" width="32" height="21" fill="url(#vcyl)" stroke="#000" stroke-width="1.0"/>
<rect x="994" y="428" width="38" height="25" fill="#a2a2a2" stroke="#000" stroke-width="1.2"/>
<rect x="994" y="428" width="8" height="25" fill="#8a8a8a" stroke="#000" stroke-width="0.8"/>
<circle cx="998" cy="441" r="1.6" fill="#333" stroke="#000" stroke-width="0.5"/>
<rect x="1003" y="417" width="21" height="12" fill="url(#vcyl)" stroke="#000" stroke-width="1.0"/>
<rect x="1009" y="366" width="8.5" height="52" fill="url(#vcyl)" stroke="#000" stroke-width="1.0"/>
<rect x="1004" y="324" width="17" height="42" fill="url(#vcyl)" stroke="#000" stroke-width="1.1"/>
<line x1="1004" y1="361" x2="1021" y2="361" stroke="#000" stroke-width="0.8"/>
<rect x="1005.5" y="311" width="14" height="13" fill="#a8a8a8" stroke="#000" stroke-width="1.0"/>
<line x1="1008" y1="311" x2="1008" y2="324" stroke="#000" stroke-width="0.7"/>
<line x1="1017" y1="311" x2="1017" y2="324" stroke="#000" stroke-width="0.7"/>
<polygon points="1311,437 1332,436 1336,442 1315,443" fill="#858585" stroke="#000" stroke-width="0.9" stroke-linejoin="round" />
<polygon points="1351,350.8 1393.6,371 1374.7,438 1321.5,440" fill="#979797" stroke="#000" stroke-width="1.3" stroke-linejoin="round" />
<polygon points="1351,350.8 1355.5,352.5 1326,440 1321.5,440" fill="#b8b8b8" stroke="#000" stroke-width="0.9" stroke-linejoin="round" />
<ellipse cx="1419.5" cy="242.2" rx="125.5" ry="128.5" fill="#8e8e8e" stroke="#000" stroke-width="1.4"/>
<ellipse cx="1423.5" cy="244.2" rx="125.5" ry="128.5" fill="none" stroke="#000" stroke-width="0.8"/>
<ellipse cx="1428" cy="245.5" rx="125.5" ry="128.5" fill="#8f8f8f" stroke="#000" stroke-width="1.4"/>
<polygon points="1514,148 1556,142 1560,156 1521,163" fill="#939393" stroke="#000" stroke-width="1.0" stroke-linejoin="round" />
<g transform="translate(1552,150) rotate(24.44)"><ellipse cx="0" cy="0" rx="2.50" ry="5" fill="url(#cylg)" stroke="#000" stroke-width="1"/><rect x="0" y="-5" width="12.08" height="10" fill="url(#cylg)"/><path d="M0 -5 H12.08 M0 5 H12.08" stroke="#000" stroke-width="1"/><ellipse cx="12.08" cy="0" rx="4.25" ry="5" fill="#939393" stroke="#000" stroke-width="1.3"/></g>
<circle cx="1564" cy="155.5" r="2" fill="#939393" stroke="#000" stroke-width="0.6"/>
<polygon points="1290,178.6 1313,174.3 1305.8,188.7" fill="#939393" stroke="#000" stroke-width="0.8" stroke-linejoin="round" />
<g transform="translate(1281,186) rotate(31.22)"><ellipse cx="0" cy="0" rx="5.50" ry="11" fill="url(#cylg)" stroke="#000" stroke-width="1"/><rect x="0" y="-11" width="38.59" height="22" fill="url(#cylg)"/><path d="M0 -11 H38.59 M0 11 H38.59" stroke="#000" stroke-width="1"/><ellipse cx="38.59" cy="0" rx="9.35" ry="11" fill="#939393" stroke="#000" stroke-width="1.3"/></g>
<circle cx="1318" cy="211.6" r="15" fill="#929292" stroke="#000" stroke-width="1.0"/>
<circle cx="1318" cy="211.6" r="10" fill="#939393" stroke="#000" stroke-width="0.8"/>
<circle cx="1318" cy="211.6" r="7.5" fill="#939393" stroke="#000" stroke-width="0.6"/>
<circle cx="1318" cy="211.6" r="3" fill="#939393" stroke="#000" stroke-width="0.7"/>
<circle cx="1429.6" cy="247.3" r="19" fill="#8e8e8e" stroke="#000" stroke-width="1.0"/>
<circle cx="1429.6" cy="247.3" r="16" fill="#8f8f8f" stroke="#000" stroke-width="0.8"/>
<circle cx="1436" cy="224.4" r="1.7" fill="#222" stroke="#000" stroke-width="0.5"/>
<circle cx="1407.4" cy="238.8" r="1.7" fill="#222" stroke="#000" stroke-width="0.5"/>
<circle cx="1420.3" cy="267.4" r="1.7" fill="#222" stroke="#000" stroke-width="0.5"/>
<g transform="translate(1433,243) rotate(51.46)"><ellipse cx="0" cy="0" rx="3.75" ry="7.5" fill="url(#cylg)" stroke="#000" stroke-width="1"/><rect x="0" y="-7.5" width="21.99" height="15.0" fill="url(#cylg)"/><path d="M0 -7.5 H21.99 M0 7.5 H21.99" stroke="#000" stroke-width="1"/><ellipse cx="21.99" cy="0" rx="6.80" ry="8" fill="#939393" stroke="#000" stroke-width="1.3"/></g>
<polygon points="1455,252 1462,249 1467,262 1459,265" fill="#a8a8a8" stroke="#000" stroke-width="0.8" stroke-linejoin="round" />
<polygon points="1466,253 1492,270.5 1488,277.5 1462,262" fill="#c4c4c4" stroke="#000" stroke-width="0.9" stroke-linejoin="round" />
<line x1="1484" y1="268" x2="1480" y2="275" stroke="#000" stroke-width="0.7"/>
</svg>
<svg class="a" style="left:0;top:0" width="1920" height="1048" viewBox="0 0 1920 1048"><g>
<defs><linearGradient id="wmg" x1="0" y1="0" x2="1" y2="1"><stop offset="0" stop-color="#f8c020"/><stop offset="1" stop-color="#f06a20"/></linearGradient></defs>
<path d="M891 539.5 V517 H894 V536 M895 536 V513 H898 V533 M899 533 V508.5 H902 V531" fill="none" stroke="#f07a22" stroke-width="1.8"/>
<path d="M936.4 539.5 V517 H933.4 V536 M932.4 536 V513 H929.4 V533 M928.4 533 V508.5 H925.4 V531" fill="none" stroke="#f07a22" stroke-width="1.8"/>
<path d="M891 539.5 Q905 534 913.7 537.5 Q922 534 936.4 539.5" fill="none" stroke="#f39020" stroke-width="2.2"/>
<path d="M911 510 Q902 515 905 526 Q908 534 914 536 Q921 531 922.8 521 Q919 528 913 528 Q908 523 911 510Z" fill="url(#wmg)"/>
<text x="946" y="530" font-size="17" fill="#f58a26" font-family="Liberation Sans" letter-spacing="-0.2">智造资料网</text>
<text x="947" y="538.5" font-size="5.2" fill="#f58a26" font-family="Liberation Sans" textLength="82" lengthAdjust="spacingAndGlyphs">INTELLIGENT MANUFACTURING DATA</text>
</g></svg>
<div class="vb" style="left:64px;top:113px"></div>
<svg class="a" style="left:64px;top:113px" width="24" height="24" viewBox="0 0 24 24"><rect x="4" y="4" width="16" height="3.5" rx="1" fill="#4a6090" stroke="#8a9ac0" stroke-width="0.5"/><rect x="4" y="10" width="16" height="3.5" rx="1" fill="#4a6090" stroke="#8a9ac0" stroke-width="0.5"/><rect x="4" y="16" width="16" height="3.5" rx="1" fill="#4a6090" stroke="#8a9ac0" stroke-width="0.5"/></svg>
<div class="vb" style="left:92px;top:113px"></div>
<svg class="a" style="left:92px;top:113px" width="24" height="24" viewBox="0 0 24 24"><rect x="7" y="7" width="10" height="10" fill="#e8eefc" stroke="#333" stroke-width="0.8"/><path d="M3 3 L7 7 M21 3 L17 7 M3 21 L7 17 M21 21 L17 17" stroke="#30c030" stroke-width="2.2"/></svg>
<div class="vb" style="left:120px;top:113px"></div>
<svg class="a" style="left:120px;top:113px" width="24" height="24" viewBox="0 0 24 24"><path d="M4 20 L10 14 M3 16 L8 11 M5 12 L9 8" stroke="#d0d4dc" stroke-width="1.8"/><circle cx="14" cy="10" r="5.5" fill="#b8cce4" stroke="#5a8ad0" stroke-width="1.4"/></svg>
<div class="vb" style="left:148px;top:113px"></div>
<svg class="a" style="left:148px;top:113px" width="24" height="24" viewBox="0 0 24 24"><path d="M3 15 L12 7 L21 12 L12 21Z" fill="none" stroke="#666" stroke-width="0.6"/><path d="M10 18 V4" stroke="#2a7af0" stroke-width="2"/><path d="M7 6 L10 1 L13 6Z" fill="#2a7af0"/><path d="M10 18 L19 11" stroke="#30c030" stroke-width="1.6"/><path d="M10 18 L19 22" stroke="#e02020" stroke-width="2"/><circle cx="10" cy="18" r="2" fill="#f4f4f4" stroke="#444" stroke-width="0.6"/></svg>
<div class="vb" style="left:176px;top:113px"></div>
<svg class="a" style="left:176px;top:113px" width="24" height="24" viewBox="0 0 24 24"><path d="M12.4 13.4 L3.2 17.2 M12.4 13.4 L21.8 17.2 M12.4 13.4 L12.4 3.6" fill="none" stroke="#000" stroke-width="1.2"/><path d="M12.4 3.6 L21.8 7.6 L12.4 11.8 L3.2 7.6Z" fill="#3cc82c"/><path d="M12.4 3.6 L21.8 7.6 L21.8 17.2 L12.4 21.5 L3.2 17.2 L3.2 7.6Z M12.4 11.8 L3.2 7.6 M12.4 11.8 L21.8 7.6 M12.4 11.8 L12.4 21.5" fill="none" stroke="#000" stroke-width="1.3" stroke-linejoin="round"/></svg>
<div class="vb" style="left:204px;top:113px"></div>
<svg class="a" style="left:204px;top:113px" width="24" height="24" viewBox="0 0 24 24"><path d="M12.4 13.4 L21.8 17.2 L12.4 21.5 L3.2 17.2Z" fill="#3cc82c"/><path d="M12.4 13.4 L3.2 17.2 M12.4 13.4 L21.8 17.2 M12.4 13.4 L12.4 3.6" fill="none" stroke="#000" stroke-width="1.2"/><path d="M12.4 3.6 L21.8 7.6 L21.8 17.2 L12.4 21.5 L3.2 17.2 L3.2 7.6Z M12.4 11.8 L3.2 7.6 M12.4 11.8 L21.8 7.6 M12.4 11.8 L12.4 21.5" fill="none" stroke="#000" stroke-width="1.3" stroke-linejoin="round"/></svg>
<div class="vb" style="left:232px;top:113px"></div>
<svg class="a" style="left:232px;top:113px" width="24" height="24" viewBox="0 0 24 24"><path d="M3.2 7.6 L12.4 3.6 L12.4 13.4 L3.2 17.2Z" fill="#3cc82c"/><path d="M12.4 13.4 L3.2 17.2 M12.4 13.4 L21.8 17.2 M12.4 13.4 L12.4 3.6" fill="none" stroke="#000" stroke-width="1.2"/><path d="M12.4 3.6 L21.8 7.6 L21.8 17.2 L12.4 21.5 L3.2 17.2 L3.2 7.6Z M12.4 11.8 L3.2 7.6 M12.4 11.8 L21.8 7.6 M12.4 11.8 L12.4 21.5" fill="none" stroke="#000" stroke-width="1.3" stroke-linejoin="round"/></svg>
<div class="vb" style="left:260px;top:113px"></div>
<svg class="a" style="left:260px;top:113px" width="24" height="24" viewBox="0 0 24 24"><path d="M12.4 13.4 L3.2 17.2 M12.4 13.4 L21.8 17.2 M12.4 13.4 L12.4 3.6" fill="none" stroke="#000" stroke-width="1.2"/><path d="M12.4 11.8 L21.8 7.6 L21.8 17.2 L12.4 21.5Z" fill="#3cc82c"/><path d="M12.4 3.6 L21.8 7.6 L21.8 17.2 L12.4 21.5 L3.2 17.2 L3.2 7.6Z M12.4 11.8 L3.2 7.6 M12.4 11.8 L21.8 7.6 M12.4 11.8 L12.4 21.5" fill="none" stroke="#000" stroke-width="1.3" stroke-linejoin="round"/></svg>
<div class="vb" style="left:288px;top:113px"></div>
<svg class="a" style="left:288px;top:113px" width="24" height="24" viewBox="0 0 24 24"><path d="M12.4 13.4 L3.2 17.2 M12.4 13.4 L21.8 17.2 M12.4 13.4 L12.4 3.6" fill="none" stroke="#000" stroke-width="1.2"/><path d="M3.2 7.6 L12.4 11.8 L12.4 21.5 L3.2 17.2Z" fill="#3cc82c"/><path d="M12.4 3.6 L21.8 7.6 L21.8 17.2 L12.4 21.5 L3.2 17.2 L3.2 7.6Z M12.4 11.8 L3.2 7.6 M12.4 11.8 L21.8 7.6 M12.4 11.8 L12.4 21.5" fill="none" stroke="#000" stroke-width="1.3" stroke-linejoin="round"/></svg>
<div class="vb" style="left:316px;top:113px"></div>
<svg class="a" style="left:316px;top:113px" width="24" height="24" viewBox="0 0 24 24"><path d="M12.4 3.6 L21.8 7.6 L21.8 17.2 L12.4 13.4Z" fill="#3cc82c"/><path d="M12.4 13.4 L3.2 17.2 M12.4 13.4 L21.8 17.2 M12.4 13.4 L12.4 3.6" fill="none" stroke="#000" stroke-width="1.2"/><path d="M12.4 3.6 L21.8 7.6 L21.8 17.2 L12.4 21.5 L3.2 17.2 L3.2 7.6Z M12.4 11.8 L3.2 7.6 M12.4 11.8 L21.8 7.6 M12.4 11.8 L12.4 21.5" fill="none" stroke="#000" stroke-width="1.3" stroke-linejoin="round"/></svg>
<div class="vb" style="left:344px;top:113px"></div>
<svg class="a" style="left:344px;top:113px" width="24" height="24" viewBox="0 0 24 24"><path d="M3.2 7.6 L12.4 3.6 L21.8 7.6 L21.8 17.2 L12.4 21.5 L3.2 17.2Z" fill="#38b82a" stroke="#1a8a14" stroke-width="1.2"/><path d="M3.2 7.6 L12.4 11.8 L21.8 7.6 L12.4 3.6Z" fill="#5ad844"/><path d="M12.4 11.8 L21.8 7.6 L21.8 17.2 L12.4 21.5Z" fill="#7ae860"/><path d="M3.2 7.6 L12.4 11.8 L21.8 7.6 M12.4 11.8 L12.4 21.5" fill="none" stroke="#1a8a14" stroke-width="1"/></svg>
<div class="vb" style="left:64px;top:141px"></div>
<svg class="a" style="left:64px;top:141px" width="24" height="24" viewBox="0 0 24 24"><g transform="translate(2,2)"><path d="M4.5 4 V16 A5.5 2.2 0 0 0 15.5 16 V4" fill="none" stroke="#222" stroke-width="0.9"/><ellipse cx="10" cy="4" rx="5.5" ry="2.2" fill="none" stroke="#222" stroke-width="0.9"/></g></svg>
<div class="vb" style="left:64px;top:169px"></div>
<svg class="a" style="left:64px;top:169px" width="24" height="24" viewBox="0 0 24 24"><g transform="translate(2,2)"><path d="M4.5 4 V16 A5.5 2.2 0 0 0 15.5 16 V4" fill="none" stroke="#222" stroke-width="0.9"/><ellipse cx="10" cy="4" rx="5.5" ry="2.2" fill="none" stroke="#222" stroke-width="0.9"/></g></svg>
<div class="vb" style="left:64px;top:197px;background:#b0a060;border:1px solid #e8d070"></div>
<svg class="a" style="left:64px;top:197px" width="24" height="24" viewBox="0 0 24 24"><g transform="translate(2,2)"><path d="M4.5 4 V16 A5.5 2.2 0 0 0 15.5 16 V4" fill="#4a72c0" stroke="#222" stroke-width="0.9"/><ellipse cx="10" cy="4" rx="5.5" ry="2.2" fill="#88a8e0" stroke="#222" stroke-width="0.9"/></g></svg>
<div class="vb" style="left:64px;top:225px"></div>
<svg class="a" style="left:64px;top:225px" width="24" height="24" viewBox="0 0 24 24"><g transform="translate(2,2)"><path d="M4.5 4 V16 A5.5 2.2 0 0 0 15.5 16 V4" fill="#d8e4f4" stroke="#222" stroke-width="0.9"/><ellipse cx="10" cy="4" rx="5.5" ry="2.2" fill="#eef4fc" stroke="#222" stroke-width="0.9"/></g></svg>
<div class="vb" style="left:64px;top:253px"></div>
<svg class="a" style="left:64px;top:253px" width="24" height="24" viewBox="0 0 24 24"><g transform="translate(2,2)"><path d="M4.5 4 V16 A5.5 2.2 0 0 0 15.5 16 V4" fill="#9a9ea8" stroke="#222" stroke-width="0.9"/><ellipse cx="10" cy="4" rx="5.5" ry="2.2" fill="#aaa" stroke="#222" stroke-width="0.9"/><path d="M8 7 L10 18 M13 7 L11 18" stroke="#222" stroke-width="0.8"/></g></svg>
<div class="a" style="left:0;top:118px;width:60px;height:883px;background:#d6dce9"></div>
<div class="a" style="left:2px;top:121px;width:56px;height:2px;background-image:linear-gradient(90deg,#fff 50%,transparent 50%);background-size:3px 2px"></div>
<div class="a" style="left:2px;top:374px;width:56px;height:2px;background-image:linear-gradient(90deg,#fff 50%,transparent 50%);background-size:3px 2px"></div>
<svg class="a" style="left:7px;top:133px" width="20" height="20" viewBox="0 0 20 20"><path d="M3 5 L8 4 M2 8 L6 8 M3 11 L6 11" stroke="#c0c4cc" stroke-width="1.6"/><circle cx="12" cy="8" r="5.8" fill="#b8cce8" stroke="#8898b0" stroke-width="1.5"/><path d="M8 12 L3 17" stroke="#c8c8c8" stroke-width="2.4"/><ellipse cx="12" cy="17" rx="6" ry="1.4" fill="#555" opacity="0.3"/></svg>
<svg class="a" style="left:33px;top:133px" width="20" height="20" viewBox="0 0 20 20"><path d="M3 3 L15 17 M6 1 L18 14" stroke="#3a7ad8" stroke-width="1.2" stroke-dasharray="2 1"/><ellipse cx="9" cy="17.5" rx="6" ry="1.5" fill="#444" opacity="0.35"/><path d="M16 3 L18.5 5.5 L8 16 L4.5 17 L5.5 13.5Z" fill="#d8a040" stroke="#5a4020" stroke-width="0.7"/><path d="M16 3 L18.5 5.5" stroke="#e04040" stroke-width="1.8"/><path d="M15 0 H20 L17.5 3Z" fill="#000"/></svg>
<svg class="a" style="left:7px;top:158px" width="20" height="20" viewBox="0 0 20 20"><rect x="3" y="4.5" width="14" height="11" fill="#e8eefc" stroke="#666" stroke-width="1"/><rect x="0.3999999999999999" y="1.4" width="3.2" height="3.2" fill="#40c030" stroke="#208018" stroke-width="0.5"/><rect x="16.4" y="1.4" width="3.2" height="3.2" fill="#40c030" stroke="#208018" stroke-width="0.5"/><rect x="0.3999999999999999" y="15.4" width="3.2" height="3.2" fill="#40c030" stroke="#208018" stroke-width="0.5"/><rect x="16.4" y="15.4" width="3.2" height="3.2" fill="#40c030" stroke="#208018" stroke-width="0.5"/></svg>
<svg class="a" style="left:33px;top:158px" width="20" height="20" viewBox="0 0 20 20"><path d="M10 9 Q0 6 3 14 Q7 20 13 13" fill="none" stroke="#3a7ad8" stroke-width="1.6"/><ellipse cx="9" cy="17.5" rx="6" ry="1.5" fill="#444" opacity="0.35"/><path d="M16 3 L18.5 5.5 L8 16 L4.5 17 L5.5 13.5Z" fill="#d8a040" stroke="#5a4020" stroke-width="0.7"/><path d="M16 3 L18.5 5.5" stroke="#e04040" stroke-width="1.8"/><path d="M15 0 H20 L17.5 3Z" fill="#000"/></svg>
<svg class="a" style="left:7px;top:185px" width="20" height="20" viewBox="0 0 20 20"><path d="M0 2.5H4 M2 0.5V4.5 M0 6H4" stroke="#000" stroke-width="0.9"/><rect x="11" y="10" width="8" height="9" fill="#606060" stroke="#333" stroke-width="0.5"/><circle cx="10" cy="8" r="5.5" fill="#b8cce8" stroke="#8898b0" stroke-width="1.4"/><path d="M6 12 L1.5 17" stroke="#c8c8c8" stroke-width="2.4"/><path d="M15 0 H20 L17.5 3Z" fill="#000"/></svg>
<svg class="a" style="left:33px;top:185px" width="20" height="20" viewBox="0 0 20 20"><path d="M3 3 H17 V9 H14 V13 H17 V18 H3Z" fill="none" stroke="#f0e000" stroke-width="1.6"/><path d="M6 11 L9 15 L16 7" fill="none" stroke="#40b840" stroke-width="2.8"/><path d="M15 0 H20 L17.5 3Z" fill="#000"/></svg>
<svg class="a" style="left:7px;top:210px" width="20" height="20" viewBox="0 0 20 20"><path d="M1 13 L11 7 L20 11 L10 18Z" fill="#dde6f6" stroke="#6a7a9a" stroke-width="0.7"/><path d="M6 13 V2.5" stroke="#2a6ae0" stroke-width="1.6"/><path d="M3.8 4.5 L6 0 L8.2 4.5Z" fill="#2a6ae0"/><path d="M6 13 L15 7" stroke="#30b030" stroke-width="1.5"/><path d="M13 6 L16 6 L15 9Z" fill="#30b030"/><path d="M6 13 L14 18" stroke="#d02020" stroke-width="1.7"/><circle cx="6" cy="13" r="1.8" fill="#f4f4f4" stroke="#555" stroke-width="0.6"/><path d="M15 0 H20 L17.5 3Z" fill="#000"/></svg>
<svg class="a" style="left:33px;top:210px" width="20" height="20" viewBox="0 0 20 20"><path d="M4 6 Q0 14 5 17 Q10 18 14 10 Q16 14 18 17" fill="none" stroke="#3a7ad8" stroke-width="1.6"/><ellipse cx="9" cy="17.5" rx="6" ry="1.5" fill="#444" opacity="0.35"/><path d="M16 3 L18.5 5.5 L8 16 L4.5 17 L5.5 13.5Z" fill="#d8a040" stroke="#5a4020" stroke-width="0.7"/><path d="M16 3 L18.5 5.5" stroke="#e04040" stroke-width="1.8"/><path d="M15 0 H20 L17.5 3Z" fill="#000"/></svg>
<svg class="a" style="left:7px;top:237px" width="20" height="20" viewBox="0 0 20 20"><ellipse cx="11.3" cy="13.5" rx="7.2" ry="4.6" fill="#e0b090" stroke="#7a4a30" stroke-width="0.8"/>
<path d="M1.5 2.5 H10 L12 4.5 H2.5Z" fill="#8a90f8" stroke="#6a70d8" stroke-width="0.6"/>
<path d="M1.5 5.5 H10 L11.5 7.5 H2Z" fill="#e8e8e8" stroke="#555" stroke-width="0.8"/>
<path d="M1.5 8.5 H10 L11.5 10.5 H2Z" fill="#f0f0f0" stroke="#555" stroke-width="0.8"/>
<circle cx="15.7" cy="12" r="2" fill="#d02020"/><circle cx="14.8" cy="15.5" r="2" fill="#10c010"/><circle cx="10.1" cy="16" r="2" fill="#1040f0"/>
<path d="M18.5 2 L10 12" stroke="#c06010" stroke-width="1.6"/><path d="M11 11 L9 13.5" stroke="#ddd" stroke-width="1.8"/><path d="M15 0 H20 L17.5 3Z" fill="#000"/></svg>
<svg class="a" style="left:33px;top:237px" width="20" height="20" viewBox="0 0 20 20"><path d="M5 3 L19 2 L15 17 L1 18Z" fill="#5a8ae0" stroke="#2a4aa0" stroke-width="0.8"/><path d="M4 10 L17 9 M10 2 L8 18" stroke="#d8e8fc" stroke-width="1.4"/><path d="M15 0 H20 L17.5 3Z" fill="#000"/></svg>
<svg class="a" style="left:7px;top:263px" width="20" height="20" viewBox="0 0 20 20"><path d="M3 9 A7 6 0 0 1 16 7" fill="none" stroke="#5a96d8" stroke-width="3"/><path d="M14 2 L18 8 L12 9Z" fill="#5a96d8"/>
<path d="M17 11 A7 6 0 0 1 4 13" fill="none" stroke="#5a96d8" stroke-width="3"/><path d="M6 18 L2 12 L8 11Z" fill="#5a96d8"/><path d="M15 0 H20 L17.5 3Z" fill="#000"/></svg>
<svg class="a" style="left:33px;top:263px" width="20" height="20" viewBox="0 0 20 20"><path d="M2 6 L10 3 L18 6 V14 L10 18 L2 14Z" fill="#8a8a84" stroke="#333" stroke-width="0.8"/><path d="M2 6 L10 9 L18 6 L10 3Z" fill="#d8d8d0"/><path d="M10 9V18" stroke="#333" stroke-width="0.7"/><path d="M15 0 H20 L17.5 3Z" fill="#000"/></svg>
<svg class="a" style="left:7px;top:288px" width="20" height="20" viewBox="0 0 20 20"><path d="M6 7 Q6 2 10.5 2 Q15 2 15 6.5 Q15 9 11 11 V13" fill="none" stroke="#3a6ac8" stroke-width="2.6"/><circle cx="11" cy="17" r="1.6" fill="#3a6ac8"/><ellipse cx="11" cy="19" rx="5" ry="1" fill="#888" opacity="0.5"/><path d="M15 0 H20 L17.5 3Z" fill="#000"/></svg>
<svg class="a" style="left:33px;top:288px" width="20" height="20" viewBox="0 0 20 20"><path d="M3 4 V18 M17 4 V18" stroke="#333" stroke-width="1"/><path d="M3 7 H17" stroke="#e8c800" stroke-width="1.6"/><path d="M3 7 L6 5 M3 7 L6 9 M17 7 L14 5 M17 7 L14 9" stroke="#e8c800" stroke-width="1.2"/><path d="M15 0 H20 L17.5 3Z" fill="#000"/></svg>
<svg class="a" style="left:7px;top:314px" width="20" height="20" viewBox="0 0 20 20"><path d="M4 6 H16 L14.5 19 H5.5Z" fill="#a8c8e0" stroke="#4a6a8a" stroke-width="0.8"/><rect x="3" y="4" width="14" height="2.5" fill="#7a9ab8"/><path d="M8 2 H12 V4 H8Z" fill="#e8d000"/><path d="M15 0 H20 L17.5 3Z" fill="#000"/></svg>
<svg class="a" style="left:33px;top:314px" width="20" height="20" viewBox="0 0 20 20"><path d="M15 15 Q17 6 9 6 H7" fill="none" stroke="#a4a4a4" stroke-width="3"/><path d="M3 6 L9 1 V11Z" fill="#a4a4a4"/><path d="M15 0 H20 L17.5 3Z" fill="#000"/></svg>
<svg class="a" style="left:7px;top:341px" width="20" height="20" viewBox="0 0 20 20"><path d="M2 2 V18 M4 2 V18" stroke="#333" stroke-width="0.8"/><circle cx="11" cy="10" r="5" fill="none" stroke="#e87820" stroke-width="1.6"/><path d="M11 3 V17 M4 10 H18 M6 5 L16 15 M16 5 L6 15" stroke="#e87820" stroke-width="1.2"/><path d="M2 14 L18 18" stroke="#e87820" stroke-width="2.2"/><path d="M15 0 H20 L17.5 3Z" fill="#000"/></svg>
<svg class="a" style="left:33px;top:341px" width="20" height="20" viewBox="0 0 20 20"><path d="M1 6 H8 L9 8 H19 V18 H1Z" fill="#f0c860" stroke="#b08020" stroke-width="0.8"/><rect x="6" y="11" width="13" height="8" fill="#f4f4f4" stroke="#555" stroke-width="0.7"/><path d="M7 8 Q10 2 16 3" fill="none" stroke="#30a030" stroke-width="2.2"/><path d="M14 0 L18 3 L14 6Z" fill="#30a030"/></svg>
<svg class="a" style="left:60px;top:880px" width="80" height="80" viewBox="0 0 80 80"><path d="M0 66 L60 62" stroke="#18c8d0" stroke-width="2.2"/>
<path d="M35 38 H57 L62 43 V68 L59 72 H40 L35 68Z" fill="#5a6e94" stroke="#d8d8d8" stroke-width="0.8"/>
<path d="M58 38 L63 41 V66" fill="none" stroke="#e8e800" stroke-width="0.8"/>
<path d="M60 65 V18" stroke="#20c020" stroke-width="2.6"/><path d="M56 22 L60 10 L64 22Z" fill="#20d020"/>
<text x="55" y="9" font-size="10" fill="#d8d8d8" font-family="Liberation Sans">Y</text>
<circle cx="59" cy="64" r="2.2" fill="#888"/><circle cx="63" cy="66" r="3.3" fill="#e01010"/>
<path d="M62 65 L69 72 M69 65 L62 72" stroke="#e0e0e0" stroke-width="0.9"/></svg>
<svg class="a" style="left:1820px;top:345px" width="100" height="110" viewBox="0 0 100 110"><text x="10" y="77" font-size="11" fill="#e0e0e0" font-family="Liberation Sans">Z</text>
<path d="M1 8 H99" stroke="none"/>
<path d="M87 16 Q91 18 90 22 M87 16 V55 M87 62 V80 Q87 84 91 86" fill="none" stroke="#d8d8d8" stroke-width="0.9" stroke-dasharray="3 2"/>
<path d="M88 30 L100 36 V100 L88 94Z" fill="#3a4668" opacity="0.5"/>
<path d="M32 70.5 L94 68" stroke="#18a8b8" stroke-width="2.2"/><path d="M34 66 L22 71 L34 75Z" fill="#18a8b8"/>
<path d="M94 68 V34" stroke="#20a030" stroke-width="2"/><path d="M89.5 35 L94 24 L98.5 35Z" fill="#20a030"/>
<text x="89" y="18" font-size="10" fill="#d8d8d8" font-family="Liberation Sans">Y</text>
<circle cx="94" cy="68" r="2.6" fill="#666"/><circle cx="99" cy="72" r="3" fill="#e01010"/></svg>
<div class="a" style="left:0;top:1001px;width:1920px;height:19px;background:#d6dce9"></div>
<div class="a" style="left:2px;top:1020px;width:1918px;height:1px;background:#a0a0a0"></div>
<div class="a" style="left:0;top:1021px;width:1920px;height:19px;background:#d6dce9"></div>
<div class="a" style="left:0;top:1040px;width:1920px;height:8px;background:#1c1c1c"></div>
<div class="a" style="left:48px;top:1040px;width:344px;height:8px;background:#f0f0f0"></div>
<div class="a" style="left:638px;top:1040px;width:45px;height:8px;background:#4a4a4a"></div>
<div class="a" style="left:1915px;top:1040px;width:1px;height:8px;background:#888"></div>
<div class="a" style="left:1814px;top:1044px;font-size:8px;line-height:8px;color:#ddd">10:40</div>
<svg class="a" style="left:1336px;top:1003px" width="3" height="15"><rect width="3" height="15" fill="url(#dp)"/></svg>
<div class="a" style="left:1341px;top:1002px;width:132px;height:18px;background:#fff"></div>
<svg class="a" style="left:1459px;top:1003px" width="14" height="14" viewBox="0 0 14 14"><circle cx="8" cy="6" r="3.5" fill="none" stroke="#2a5ab0" stroke-width="1.3"/><path d="M5.5 8.5 L1.5 12.5" stroke="#2a5ab0" stroke-width="1.6"/></svg>
<svg class="a" style="left:1475px;top:1003px" width="3" height="15"><rect width="3" height="15" fill="url(#dp)"/></svg>
<div class="st" style="left:1486px;top:1004px">绝对 XY 上视图</div>
<div class="vl" style="left:1592px;top:1003px"></div>
<div class="st" style="left:1602px;top:1004px">绝对视图</div>
<svg class="a" style="left:1656px;top:1003px" width="3" height="15"><rect width="3" height="15" fill="url(#dp)"/></svg>
<div class="st" style="left:1668px;top:1004px;font-weight:bold">LAYER0</div>
<div class="vl" style="left:1726px;top:1003px"></div>
<div class="vl" style="left:1757px;top:1003px"></div>
<div class="vl" style="left:1800px;top:1003px"></div>
<div class="vl" style="left:1843px;top:1003px"></div>
<div class="vl" style="left:1886px;top:1003px"></div>
<div class="a" style="left:1762px;top:1005px;width:32px;height:12px;background:#46618c"></div>
<div class="a" style="left:1805px;top:1005px;width:32px;height:12px;background:#46618c"></div>
<div class="a" style="left:1848px;top:1005px;width:32px;height:12px;background:#46618c"></div>
<svg class="a" style="left:1893px;top:1003px" width="14" height="14" viewBox="0 0 14 14"><circle cx="7" cy="7" r="6" fill="#1a4ad8"/><path d="M3 3 Q6 5 5 8 Q8 9 7 12 M8 2 Q11 4 12 8" stroke="#30c030" stroke-width="2.2" fill="none"/></svg>
<div class="vl" style="left:1132px;top:1023px;width:1px"></div>
<div class="vl" style="left:1175px;top:1023px;width:1px"></div>
<div class="vl" style="left:1205px;top:1023px;width:1px"></div>
<div class="vl" style="left:1236px;top:1023px;width:1px"></div>
<div class="vl" style="left:1267px;top:1023px;width:1px"></div>
<div class="vl" style="left:1299px;top:1023px;width:1px"></div>
<div class="vl" style="left:1330px;top:1023px;width:1px"></div>
<div class="vl" style="left:1361px;top:1023px;width:1px"></div>
<div class="vl" style="left:1391px;top:1023px;width:1px"></div>
<div class="vl" style="left:1424px;top:1023px;width:1px"></div>
<div class="vl" style="left:1455px;top:1023px;width:1px"></div>
<div class="vl" style="left:1577px;top:1023px;width:1px"></div>
<div class="vl" style="left:1655px;top:1023px;width:1px"></div>
<div class="st" style="left:1141px;top:1024px">拴牢</div>
<svg class="a" style="left:1182px;top:1023px" width="16" height="16" viewBox="0 0 16 16"><rect x="1" y="1" width="14" height="14" fill="#d0d4dc" stroke="#555" stroke-width="1"/><path d="M4 8 A4 4 0 0 1 12 6 M12 8 A4 4 0 0 1 4 10" fill="none" stroke="#e05060" stroke-width="1.6"/></svg>
<svg class="a" style="left:1213px;top:1023px" width="16" height="16" viewBox="0 0 16 16"><rect x="0" y="0" width="16" height="16" fill="#fbe28c"/><path d="M2 2 L11 4 L8 12Z" fill="#c050c0"/><path d="M6 6 L14 14" stroke="#999" stroke-width="2.2"/><circle cx="4" cy="4" r="2" fill="#f0e020"/></svg>
<svg class="a" style="left:1244px;top:1023px" width="16" height="16" viewBox="0 0 16 16"><path d="M2 6 L9 1 L15 4 L9 9Z" fill="#e0b060" stroke="#a07030" stroke-width="0.6"/><rect x="3" y="7" width="9" height="8" fill="#dde" stroke="#556" stroke-width="0.7"/><circle cx="6" cy="11" r="1.3" fill="#2a6ad0"/><circle cx="9" cy="12" r="1.3" fill="#2a6ad0"/></svg>
<svg class="a" style="left:1275px;top:1023px" width="16" height="16" viewBox="0 0 16 16"><path d="M4 5 Q4 1 8 1 Q12 1 12 5 Q12 7 9 8.5 V10" fill="none" stroke="#3a6ac8" stroke-width="2.2"/><circle cx="9" cy="13" r="1.3" fill="#3a6ac8"/><ellipse cx="9" cy="15" rx="4" ry="1" fill="#888" opacity="0.6"/></svg>
<svg class="a" style="left:1306px;top:1023px" width="16" height="16" viewBox="0 0 16 16"><path d="M4 2 L9 0 L13 2 V7 L9 9 L4 7Z" fill="#4a8ae0"/><path d="M8 8 L13 6 L17 8 V13 L13 15 L8 13Z" fill="#7aa0b0" stroke="#333" stroke-width="0.6"/><path d="M0 10 H8 M3 7 L7 10 L3 13" stroke="#e01010" stroke-width="1.6" fill="none"/></svg>
<svg class="a" style="left:1337px;top:1023px" width="16" height="16" viewBox="0 0 16 16"><rect x="0" y="0" width="16" height="16" fill="#fbe28c"/><path d="M2 4 L8 1 L14 4 V12 L8 15 L2 12Z" fill="#7aa8b8" stroke="#2a4a90" stroke-width="0.8"/><path d="M2 4 L8 7 L14 4 L8 1Z" fill="#d040e0"/></svg>
<div class="st" style="left:1463px;top:1024px">LS: 1.00 PS: 1.00</div>
<div class="st" style="left:1588px;top:1024px">单位: 毫米</div>
<div class="st" style="left:1663px;top:1024px;color:#f01010;letter-spacing:0.5px">X =-7583.577 Y =-1084.467 <span style="color:#000">Z = 0000.000</span></div>
<svg class="a" style="left:1340px;top:960px" width="140" height="88" viewBox="0 0 140 88">
<circle cx="27.7" cy="45.4" r="8.4" fill="#8c5a48"/><text x="23" y="50" font-size="12" fill="#fff" font-family="Liberation Sans">A</text>
<rect x="30" y="70" width="11" height="8" fill="none" stroke="#5a7a6a" stroke-width="1.2"/><rect x="90" y="62" width="16" height="16" fill="none" stroke="#5a6a8a" stroke-width="1.2"/><path d="M90 70 H106 M98 62 V78" stroke="#5a6a8a" stroke-width="1"/><circle cx="34.5" cy="66.4" r="8.4" fill="#8c5a48"/><path d="M29 62 L32 60 H37 L40 62 L38.5 65 H37.5 V71 H31.5 V65 H30.5Z" fill="#fff"/>
<ellipse cx="66" cy="77.5" rx="14" ry="2.5" fill="#a86a40" opacity="0.8"/>
<path d="M60 8 Q58 4 62 5 Q65 6 66 12" fill="none" stroke="#8a4a20" stroke-width="2.2"/><path d="M69 6 Q70 9 69 13" fill="none" stroke="#8a4a20" stroke-width="2"/>
<path d="M48 58 Q45 65 52 68 L54 76 Q58 79 62 76 L66 74 L70 78 Q76 79 77 74 L80 68 Q86 64 84 58 Q70 52 48 58Z" fill="#ffee44" stroke="#c88030" stroke-width="1"/>
<circle cx="49.6" cy="17.6" r="5.6" fill="#c8864a" stroke="#8a5028" stroke-width="0.8"/><circle cx="49" cy="17" r="2.2" fill="#f0c0a0"/>
<circle cx="83.6" cy="17.6" r="5.6" fill="#c8864a" stroke="#8a5028" stroke-width="0.8"/><circle cx="84" cy="17" r="2.2" fill="#f0c0a0"/>
<ellipse cx="66.4" cy="36" rx="26.5" ry="22" fill="#c8864a" stroke="#8a5028" stroke-width="0.8"/>
<ellipse cx="66.4" cy="41" rx="21" ry="17.5" fill="#fff050" stroke="#d89030" stroke-width="0.7"/>
<circle cx="55.6" cy="33.5" r="1.3" fill="#5a2a10"/><circle cx="76.8" cy="33.5" r="1.3" fill="#5a2a10"/>
<ellipse cx="51" cy="39" rx="3" ry="2" fill="#f8a030" opacity="0.8"/><ellipse cx="81.5" cy="39" rx="3" ry="2" fill="#f8a030" opacity="0.8"/>
<path d="M65 37.5 H68" stroke="#5a2a10" stroke-width="0.9"/>
<ellipse cx="56" cy="70" rx="7.5" ry="6.5" fill="#c8864a" stroke="#8a5028" stroke-width="0.7"/><circle cx="51" cy="64" r="2" fill="#c8864a"/><circle cx="61" cy="64" r="2" fill="#c8864a"/>
<circle cx="53" cy="71" r="1" fill="#f070b0"/><circle cx="59.5" cy="71" r="1" fill="#f070b0"/>
<path d="M60 67 L75 57" stroke="#9a6030" stroke-width="1.3"/>
<path d="M94 12 L97 31 L102 31 L105 23 L108 31 L113 31 L117 12 L111 12 L109.5 22 L105.5 15 L101.5 22 L100 12Z" fill="#fff4e8" stroke="#c8864a" stroke-width="1.6"/>
<circle cx="100" cy="25" r="1.3" fill="#d8a070"/><circle cx="107" cy="19" r="1.3" fill="#d8a070"/>
<circle cx="98.5" cy="32" r="3.6" fill="#c8864a"/><circle cx="114.5" cy="32" r="3.6" fill="#c8864a"/><circle cx="98.5" cy="32" r="1.6" fill="#e8b090"/><circle cx="114.5" cy="32" r="1.6" fill="#e8b090"/><ellipse cx="106.5" cy="42" rx="9.5" ry="10.5" fill="#c8864a" stroke="#a0602a" stroke-width="0.8"/><ellipse cx="106.5" cy="42" rx="3" ry="4.5" fill="#fff4e8"/>
<path d="M95 51 L98 73 L104 73 L107 64 L110 73 L116 73 L119 51 L112.5 51 L111 62 L107 55 L103 62 L101.5 51Z" fill="#ffee44" stroke="#c8864a" stroke-width="1.4"/>
</svg>
</body></html>
